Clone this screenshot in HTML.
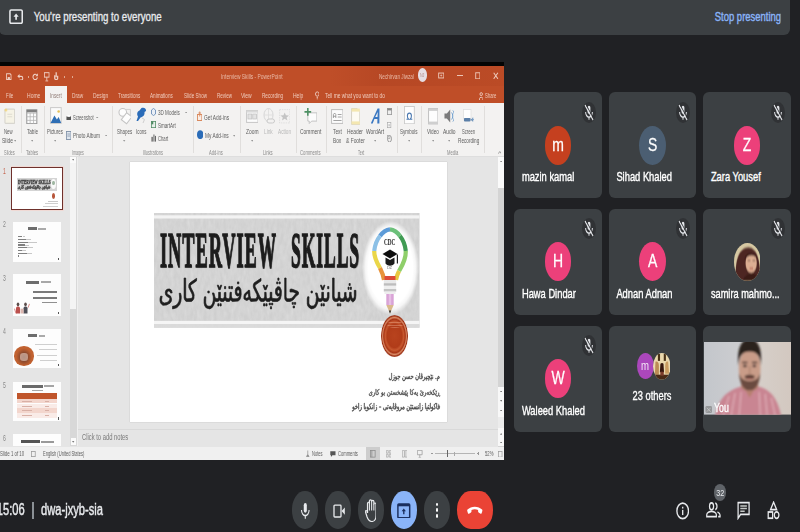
<!DOCTYPE html>
<html><head><meta charset="utf-8">
<style>
*{box-sizing:border-box;margin:0;padding:0}
html,body{width:800px;height:532px;overflow:hidden;background:#202124;font-family:"Liberation Sans",sans-serif;}
#root{position:relative;width:800px;height:532px;overflow:hidden;background:#202124}
</style></head><body>
<div id="root">
<div style="position:absolute;left:-20px;top:-20px;width:840px;height:572px;filter:blur(0.4px)"><div style="position:absolute;left:20px;top:20px;width:800px;height:532px">
<div style="position:absolute;left:-1.5px;top:-10.0px;width:791.5px;height:45.0px;background:#3c4043;border-radius:6px;"></div>
<svg style="position:absolute;left:9.0px;top:9.0px;" width="14.2" height="15.3" viewBox="0 0 24 24" preserveAspectRatio="none"><rect x="1.6" y="1.6" width="20.8" height="20.8" rx="2" fill="none" stroke="#e8eaed" stroke-width="2.6"/><path d="M12 7 L7.6 12 H10.6 V17 H13.4 V12 H16.4 Z" fill="#e8eaed"/></svg>
<div style="position:absolute;left:33.8px;top:13.21px;font-family:'Liberation Sans',sans-serif;font-size:9.68px;line-height:9.68px;color:#e8eaed;white-space:nowrap;transform:scale(1,1.36);transform-origin:0 8.19px;-webkit-text-stroke:0.25px #e8eaed;">You're presenting to everyone</div>
<div style="position:absolute;left:714.8px;top:12.99px;font-family:'Liberation Sans',sans-serif;font-size:9.46px;line-height:9.46px;color:#8ab4f8;white-space:nowrap;transform:scale(1,1.36);transform-origin:0 8.01px;-webkit-text-stroke:0.3px #8ab4f8;">Stop presenting</div>
<div style="position:absolute;left:514.3px;top:92.2px;width:87.6px;height:106.3px;background:#3c4043;border-radius:6px;"></div>
<div style="position:absolute;left:544.7px;top:125.7px;width:26.8px;height:39.0px;background:#c5401f;border-radius:50%;"></div>
<div style="position:absolute;left:358.1px;width:400px;text-align:center;top:138.75px;font-family:'Liberation Sans',sans-serif;font-size:14px;line-height:14px;color:#fff;white-space:nowrap;transform:scale(1,1.36);transform-origin:50% 11.85px;-webkit-text-stroke:0.2px #fff;">m</div>
<div style="position:absolute;left:521.9px;top:174.39px;font-family:'Liberation Sans',sans-serif;font-size:9.35px;line-height:9.35px;color:#fff;white-space:nowrap;transform:scale(1,1.36);transform-origin:0 7.91px;-webkit-text-stroke:0.28px #fff;">mazin kamal</div>
<svg style="position:absolute;left:581.7px;top:101.7px;" width="14.0" height="21.0" viewBox="0 0 24 24" preserveAspectRatio="none"><ellipse cx="12" cy="12" rx="12" ry="12" fill="#303235"/><g fill="none" stroke="#e4e6ea" stroke-width="1.700"><rect x="9.600" y="4.300" width="4.800" height="9.200" rx="2.400" fill="#e4e6ea" stroke="none"/><path d="M6.200 11.500a5.800 5.800 0 0 0 11.600 0M12 17.300v3"/><path d="M5.200 3.500 L19 20.500" stroke="#e4e6ea" stroke-width="1.900"/><path d="M6.600 2.600 L20.400 19.600" stroke="#303235" stroke-width="1.200"/></g></svg>
<div style="position:absolute;left:608.8px;top:92.2px;width:87.6px;height:106.3px;background:#3c4043;border-radius:6px;"></div>
<div style="position:absolute;left:639.2px;top:125.7px;width:26.8px;height:39.0px;background:#4b5e72;border-radius:50%;"></div>
<div style="position:absolute;left:452.6px;width:400px;text-align:center;top:138.75px;font-family:'Liberation Sans',sans-serif;font-size:14px;line-height:14px;color:#fff;white-space:nowrap;transform:scale(1,1.36);transform-origin:50% 11.85px;-webkit-text-stroke:0.2px #fff;">S</div>
<div style="position:absolute;left:616.4px;top:174.39px;font-family:'Liberation Sans',sans-serif;font-size:9.35px;line-height:9.35px;color:#fff;white-space:nowrap;transform:scale(1,1.36);transform-origin:0 7.91px;-webkit-text-stroke:0.28px #fff;">Sihad Khaled</div>
<svg style="position:absolute;left:676.2px;top:101.7px;" width="14.0" height="21.0" viewBox="0 0 24 24" preserveAspectRatio="none"><ellipse cx="12" cy="12" rx="12" ry="12" fill="#303235"/><g fill="none" stroke="#e4e6ea" stroke-width="1.700"><rect x="9.600" y="4.300" width="4.800" height="9.200" rx="2.400" fill="#e4e6ea" stroke="none"/><path d="M6.200 11.500a5.800 5.800 0 0 0 11.600 0M12 17.300v3"/><path d="M5.200 3.500 L19 20.500" stroke="#e4e6ea" stroke-width="1.900"/><path d="M6.600 2.600 L20.400 19.600" stroke="#303235" stroke-width="1.200"/></g></svg>
<div style="position:absolute;left:703.3px;top:92.2px;width:87.6px;height:106.3px;background:#3c4043;border-radius:6px;"></div>
<div style="position:absolute;left:733.7px;top:125.7px;width:26.8px;height:39.0px;background:#ec407a;border-radius:50%;"></div>
<div style="position:absolute;left:547.1px;width:400px;text-align:center;top:138.75px;font-family:'Liberation Sans',sans-serif;font-size:14px;line-height:14px;color:#fff;white-space:nowrap;transform:scale(1,1.36);transform-origin:50% 11.85px;-webkit-text-stroke:0.2px #fff;">Z</div>
<div style="position:absolute;left:710.9px;top:174.39px;font-family:'Liberation Sans',sans-serif;font-size:9.35px;line-height:9.35px;color:#fff;white-space:nowrap;transform:scale(1,1.36);transform-origin:0 7.91px;-webkit-text-stroke:0.28px #fff;">Zara Yousef</div>
<svg style="position:absolute;left:770.7px;top:101.7px;" width="14.0" height="21.0" viewBox="0 0 24 24" preserveAspectRatio="none"><ellipse cx="12" cy="12" rx="12" ry="12" fill="#303235"/><g fill="none" stroke="#e4e6ea" stroke-width="1.700"><rect x="9.600" y="4.300" width="4.800" height="9.200" rx="2.400" fill="#e4e6ea" stroke="none"/><path d="M6.200 11.500a5.800 5.800 0 0 0 11.600 0M12 17.300v3"/><path d="M5.200 3.500 L19 20.500" stroke="#e4e6ea" stroke-width="1.900"/><path d="M6.600 2.600 L20.400 19.600" stroke="#303235" stroke-width="1.200"/></g></svg>
<div style="position:absolute;left:514.3px;top:208.8px;width:87.6px;height:106.3px;background:#3c4043;border-radius:6px;"></div>
<div style="position:absolute;left:544.7px;top:242.3px;width:26.8px;height:39.0px;background:#ec407a;border-radius:50%;"></div>
<div style="position:absolute;left:358.1px;width:400px;text-align:center;top:255.35px;font-family:'Liberation Sans',sans-serif;font-size:14px;line-height:14px;color:#fff;white-space:nowrap;transform:scale(1,1.36);transform-origin:50% 11.85px;-webkit-text-stroke:0.2px #fff;">H</div>
<div style="position:absolute;left:521.9px;top:290.99px;font-family:'Liberation Sans',sans-serif;font-size:9.35px;line-height:9.35px;color:#fff;white-space:nowrap;transform:scale(1,1.36);transform-origin:0 7.91px;-webkit-text-stroke:0.28px #fff;">Hawa Dindar</div>
<svg style="position:absolute;left:581.7px;top:218.3px;" width="14.0" height="21.0" viewBox="0 0 24 24" preserveAspectRatio="none"><ellipse cx="12" cy="12" rx="12" ry="12" fill="#303235"/><g fill="none" stroke="#e4e6ea" stroke-width="1.700"><rect x="9.600" y="4.300" width="4.800" height="9.200" rx="2.400" fill="#e4e6ea" stroke="none"/><path d="M6.200 11.500a5.800 5.800 0 0 0 11.600 0M12 17.300v3"/><path d="M5.200 3.500 L19 20.500" stroke="#e4e6ea" stroke-width="1.900"/><path d="M6.600 2.600 L20.400 19.600" stroke="#303235" stroke-width="1.200"/></g></svg>
<div style="position:absolute;left:608.8px;top:208.8px;width:87.6px;height:106.3px;background:#3c4043;border-radius:6px;"></div>
<div style="position:absolute;left:639.2px;top:242.3px;width:26.8px;height:39.0px;background:#ec407a;border-radius:50%;"></div>
<div style="position:absolute;left:452.6px;width:400px;text-align:center;top:255.35px;font-family:'Liberation Sans',sans-serif;font-size:14px;line-height:14px;color:#fff;white-space:nowrap;transform:scale(1,1.36);transform-origin:50% 11.85px;-webkit-text-stroke:0.2px #fff;">A</div>
<div style="position:absolute;left:616.4px;top:290.99px;font-family:'Liberation Sans',sans-serif;font-size:9.35px;line-height:9.35px;color:#fff;white-space:nowrap;transform:scale(1,1.36);transform-origin:0 7.91px;-webkit-text-stroke:0.28px #fff;">Adnan Adnan</div>
<svg style="position:absolute;left:676.2px;top:218.3px;" width="14.0" height="21.0" viewBox="0 0 24 24" preserveAspectRatio="none"><ellipse cx="12" cy="12" rx="12" ry="12" fill="#303235"/><g fill="none" stroke="#e4e6ea" stroke-width="1.700"><rect x="9.600" y="4.300" width="4.800" height="9.200" rx="2.400" fill="#e4e6ea" stroke="none"/><path d="M6.200 11.500a5.800 5.800 0 0 0 11.600 0M12 17.300v3"/><path d="M5.200 3.500 L19 20.500" stroke="#e4e6ea" stroke-width="1.900"/><path d="M6.600 2.600 L20.400 19.600" stroke="#303235" stroke-width="1.200"/></g></svg>
<div style="position:absolute;left:703.3px;top:208.8px;width:87.6px;height:106.3px;background:#3c4043;border-radius:6px;"></div>
<svg style="position:absolute;left:733.7px;top:242.8px;" width="26.8" height="38.0" viewBox="0 0 27 38" preserveAspectRatio="none"><defs><clipPath id="pc"><ellipse cx="13.5" cy="19" rx="13.5" ry="19"/></clipPath><filter id="pb"><feGaussianBlur stdDeviation="0.8"/></filter></defs><g clip-path="url(#pc)"><rect width="27" height="38" fill="#d6c8a2"/><g filter="url(#pb)"><path d="M2 38 C0.500 20 4 5 14.500 4.500 C24 5 27 20 26 38 Z" fill="#4e2622"/><ellipse cx="17.300" cy="20" rx="5.700" ry="9.800" fill="#dcae92"/><path d="M10.500 17 C11 8 21 7 24 16 C20 11.500 15 11 10.500 17Z" fill="#3e1c1a"/><path d="M13.800 17.500h2.600M18.800 17.500h2.600" stroke="#4a2a24" stroke-width="1.200"/><path d="M15.800 25.500h3.400" stroke="#b4584e" stroke-width="1.400"/><path d="M9 38 C10 33 14 30.500 17.500 30.500 C21 30.500 24 33 25 38Z" fill="#3a1a18"/></g></g></svg>
<div style="position:absolute;left:710.9px;top:291.08px;font-family:'Liberation Sans',sans-serif;font-size:9.24px;line-height:9.24px;color:#fff;white-space:nowrap;transform:scale(1,1.36);transform-origin:0 7.82px;-webkit-text-stroke:0.28px #fff;">samira mahmo...</div>
<svg style="position:absolute;left:770.7px;top:218.3px;" width="14.0" height="21.0" viewBox="0 0 24 24" preserveAspectRatio="none"><ellipse cx="12" cy="12" rx="12" ry="12" fill="#303235"/><g fill="none" stroke="#e4e6ea" stroke-width="1.700"><rect x="9.600" y="4.300" width="4.800" height="9.200" rx="2.400" fill="#e4e6ea" stroke="none"/><path d="M6.200 11.500a5.800 5.800 0 0 0 11.600 0M12 17.300v3"/><path d="M5.200 3.500 L19 20.500" stroke="#e4e6ea" stroke-width="1.900"/><path d="M6.600 2.600 L20.400 19.600" stroke="#303235" stroke-width="1.200"/></g></svg>
<div style="position:absolute;left:514.3px;top:325.5px;width:87.6px;height:106.3px;background:#3c4043;border-radius:6px;"></div>
<div style="position:absolute;left:544.7px;top:359.0px;width:26.8px;height:39.0px;background:#ec407a;border-radius:50%;"></div>
<div style="position:absolute;left:358.1px;width:400px;text-align:center;top:372.05px;font-family:'Liberation Sans',sans-serif;font-size:14px;line-height:14px;color:#fff;white-space:nowrap;transform:scale(1,1.36);transform-origin:50% 11.85px;-webkit-text-stroke:0.2px #fff;">W</div>
<div style="position:absolute;left:521.9px;top:407.69px;font-family:'Liberation Sans',sans-serif;font-size:9.35px;line-height:9.35px;color:#fff;white-space:nowrap;transform:scale(1,1.36);transform-origin:0 7.91px;-webkit-text-stroke:0.28px #fff;">Waleed Khaled</div>
<svg style="position:absolute;left:581.7px;top:335.0px;" width="14.0" height="21.0" viewBox="0 0 24 24" preserveAspectRatio="none"><ellipse cx="12" cy="12" rx="12" ry="12" fill="#303235"/><g fill="none" stroke="#e4e6ea" stroke-width="1.700"><rect x="9.600" y="4.300" width="4.800" height="9.200" rx="2.400" fill="#e4e6ea" stroke="none"/><path d="M6.200 11.500a5.800 5.800 0 0 0 11.600 0M12 17.300v3"/><path d="M5.200 3.500 L19 20.500" stroke="#e4e6ea" stroke-width="1.900"/><path d="M6.600 2.600 L20.400 19.600" stroke="#303235" stroke-width="1.200"/></g></svg>
<div style="position:absolute;left:608.8px;top:325.5px;width:87.6px;height:106.3px;background:#3c4043;border-radius:6px;"></div>
<div style="position:absolute;left:703.3px;top:325.5px;width:87.6px;height:106.3px;background:#3c4043;border-radius:6px;"></div>
<div style="position:absolute;left:636.6px;top:352.5px;width:17.0px;height:26.4px;background:#ab47bc;border-radius:50%;"></div>
<div style="position:absolute;left:445.1px;width:400px;text-align:center;top:361.87px;font-family:'Liberation Sans',sans-serif;font-size:9.6px;line-height:9.6px;color:#f3e5f5;white-space:nowrap;transform:scale(1,1.36);transform-origin:50% 8.13px;">m</div>
<svg style="position:absolute;left:652.7px;top:353.0px;" width="17.6" height="26.6" viewBox="0 0 18 27" preserveAspectRatio="none"><defs><clipPath id="oc"><ellipse cx="9" cy="13.5" rx="9" ry="13.5"/></clipPath><filter id="ob"><feGaussianBlur stdDeviation="0.65"/></filter></defs><g clip-path="url(#oc)"><rect width="18" height="27" fill="#ead9ae"/><g filter="url(#ob)"><rect x="5" y="1" width="2.200" height="7" fill="#4a3018"/><rect x="11" y="1" width="2.200" height="7" fill="#4a3018"/><path d="M2.500 9 C4 8 6 9 6 13 V22 H2Z" fill="#bb8c54"/><path d="M15.500 9 C14 8 12.500 9 12.500 13 V21 H16.500Z" fill="#c99c60"/><path d="M7.600 11 C8.500 10 10 10 10.700 11 L11.300 19.500 H7Z" fill="#35190e"/><rect x="0" y="22" width="18" height="5" fill="#4a2a18"/><rect x="7.500" y="19" width="3.500" height="4" fill="#7a3a2a"/></g></g></svg>
<div style="position:absolute;left:452.0px;width:400px;text-align:center;top:392.53px;font-family:'Liberation Sans',sans-serif;font-size:9.3px;line-height:9.3px;color:#fff;white-space:nowrap;transform:scale(1,1.36);transform-origin:50% 7.87px;-webkit-text-stroke:0.25px #fff;">23 others</div>
<svg style="position:absolute;left:703.5px;top:342.0px;" width="87.3" height="72.8" viewBox="0 0 87 73" preserveAspectRatio="none"><defs><filter id="vb" x="-10%" y="-10%" width="120%" height="120%"><feGaussianBlur stdDeviation="0.9"/></filter>
<linearGradient id="wall" x1="0" x2="1"><stop offset="0" stop-color="#c3c6cb"/><stop offset="0.4" stop-color="#cccdd0"/><stop offset="0.62" stop-color="#d6cfc9"/><stop offset="1" stop-color="#d3c8c0"/></linearGradient>
<clipPath id="vc"><rect width="87" height="73"/></clipPath></defs>
<g clip-path="url(#vc)"><rect width="87" height="73" fill="url(#wall)"/>
<g filter="url(#vb)">
<path d="M11 74 C15 55 24 49 36 45 L55 45 C66 48 73 56 77 74 Z" fill="#c98592"/>
<path d="M39 44 L45.500 56 L52 44Z" fill="#b8806f"/>
<path d="M37 30 H54 V46 C50 51 41 51 37 46Z" fill="#b58270"/>
<ellipse cx="45.500" cy="27" rx="10.800" ry="20" fill="#c99c88"/>
<path d="M34.500 24 C32.500 6 37.500 -3 45.500 -3 C53.500 -3 58.500 6 56.500 24 C56 14 53 9.500 45.500 9.500 C38 9.500 35 14 34.500 24Z" fill="#2a211e"/>
<path d="M35 31 C35.500 43 40 48.500 45.500 48.500 C51 48.500 55.500 43 56 31 C54 37 51 39 45.500 39 C40 39 37 37 35 31Z" fill="#6b4b41"/><path d="M40.500 34 C43 32.500 48 32.500 50.500 34 L50 36.500 H41Z" fill="#5a3c34"/>
<path d="M42.500 37 H48.500" stroke="#9a5a55" stroke-width="1.300"/>
<path d="M38 20.500 H43.200 M47.800 20.500 H53" stroke="#3a2a26" stroke-width="1.500"/>
<ellipse cx="40.800" cy="24" rx="1.900" ry="1.300" fill="#3d2d2a"/><ellipse cx="50.200" cy="24" rx="1.900" ry="1.300" fill="#3d2d2a"/>
<path d="M45.500 24 V32" stroke="#b08570" stroke-width="1.400"/>
<path d="M19 74 L25 54 M27 74 L31 51 M35 74 L37 50 M56 74 L55 50 M63 74 L61 52 M71 74 L67 56" stroke="#e2b3bc" stroke-width="1.100" fill="none"/>
</g></g></svg>
<div style="position:absolute;left:714.0px;top:404.75px;font-family:'Liberation Sans',sans-serif;font-size:8.8px;line-height:8.8px;color:#fff;white-space:nowrap;transform:scale(1,1.36);transform-origin:0 7.45px;-webkit-text-stroke:0.25px #fff;">You</div>
<svg style="position:absolute;left:704.5px;top:405.0px;" width="7.5" height="8.5" viewBox="0 0 8 9" preserveAspectRatio="none"><rect x="0.5" y="1" width="7" height="7.5" rx="1.5" fill="#707070" opacity=".55"/><path d="M2 3 L6 7 M6 3 L2 7" stroke="#ddd" stroke-width="0.800" opacity=".7"/></svg>
<div style="position:absolute;left:-3.2px;top:506.46px;font-family:'Liberation Sans',sans-serif;font-size:11.15px;line-height:11.15px;color:#e8eaed;white-space:nowrap;transform:scale(1,1.42);transform-origin:0 9.44px;-webkit-text-stroke:0.3px #e8eaed;">15:06</div>
<div style="position:absolute;left:32.2px;top:502.0px;width:1.5px;height:16.5px;background:#8a9095;"></div>
<div style="position:absolute;left:41.1px;top:506.46px;font-family:'Liberation Sans',sans-serif;font-size:11.15px;line-height:11.15px;color:#e8eaed;white-space:nowrap;transform:scale(1,1.42);transform-origin:0 9.44px;-webkit-text-stroke:0.3px #e8eaed;">dwa-jxyb-sia</div>
<div style="position:absolute;left:292.2px;top:491.4px;width:25.6px;height:37.2px;background:#3c4043;border-radius:12.8px/18.6px;"></div>
<div style="position:absolute;left:325.2px;top:491.4px;width:25.6px;height:37.2px;background:#3c4043;border-radius:12.8px/18.6px;"></div>
<div style="position:absolute;left:358.2px;top:491.4px;width:25.6px;height:37.2px;background:#3c4043;border-radius:12.8px/18.6px;"></div>
<div style="position:absolute;left:391.2px;top:491.4px;width:25.6px;height:37.2px;background:#8ab4f8;border-radius:12.8px/18.6px;"></div>
<div style="position:absolute;left:424.3px;top:491.4px;width:25.6px;height:37.2px;background:#3c4043;border-radius:12.8px/18.6px;"></div>
<div style="position:absolute;left:456.7px;top:491.4px;width:36.4px;height:37.2px;background:#ea4335;border-radius:13.8px/18.6px;"></div>
<svg style="position:absolute;left:299.0px;top:501.0px;" width="12.6" height="19.0" viewBox="0 0 14 14" preserveAspectRatio="none"><rect x="5.3" y="1.4" width="3.4" height="7.2" rx="1.7" fill="#e8eaed"/><path d="M2.8 6.6a4.2 4.2 0 0 0 8.4 0M7 10.8v2.2" fill="none" stroke="#e8eaed" stroke-width="1.2"/></svg>
<svg style="position:absolute;left:332.5px;top:503.8px;" width="12.4" height="14.2" viewBox="0 0 12.4 14.2" preserveAspectRatio="none"><rect x="1" y="1.2" width="7" height="11.8" rx="0.8" fill="none" stroke="#e8eaed" stroke-width="1.3"/><path d="M8.6 7.1 L11.8 3.4 V10.8Z" fill="#e8eaed"/></svg>
<svg style="position:absolute;left:364.8px;top:498.7px;" width="11.6" height="23.2" viewBox="0 0 11 23" preserveAspectRatio="none"><path d="M2.400 13.800V4.400Q2.400 3.200 3.300 3.200Q4.200 3.200 4.200 4.400V2Q4.200 0.800 5.250 0.800Q6.300 0.800 6.300 2V2.600Q6.300 1.400 7.350 1.400Q8.400 1.400 8.400 2.600V5Q8.400 4 9.450 4Q10.500 4 10.500 5.200V16C10.500 20 8.800 22.300 6.400 22.300C4.300 22.300 2.900 20.600 1.900 17.600L0.400 12.600C0.200 11.600 1 11 1.700 11.800L2.400 13.800" fill="none" stroke="#e8eaed" stroke-width="1.150" stroke-linejoin="round"/><path d="M4.200 4.400V11.500M6.300 2.600V11.500M8.400 5V11.500" stroke="#e8eaed" stroke-width="1" fill="none"/></svg>
<svg style="position:absolute;left:397.2px;top:502.6px;" width="13.6" height="15.8" viewBox="0 0 24 24" preserveAspectRatio="none"><rect x="1.6" y="1.6" width="20.8" height="20.8" rx="1.5" fill="none" stroke="#1b2f5e" stroke-width="2.6"/><rect x="1.6" y="1.6" width="20.8" height="3.4" fill="#1b2f5e"/><path d="M12 8.2 L8.2 12.6 H10.8 V17 H13.2 V12.6 H15.8 Z" fill="#1b2f5e"/></svg>
<div style="position:absolute;left:435.5px;top:502.7px;width:2.7px;height:3.8px;background:#fff;border-radius:50%;"></div>
<div style="position:absolute;left:435.5px;top:508.3px;width:2.7px;height:3.8px;background:#fff;border-radius:50%;"></div>
<div style="position:absolute;left:435.5px;top:514.3px;width:2.7px;height:3.8px;background:#fff;border-radius:50%;"></div>
<svg style="position:absolute;left:467.3px;top:506.0px;" width="15.6" height="8.6" viewBox="0 0 24 10" preserveAspectRatio="none"><path d="M12 0.8C7.6 0.8 3.6 2 0.8 4.2c-.5.4-.6 1-.4 1.5l1.1 2.6c.3.6 1 .9 1.6.6l3-1.3c.5-.2.8-.7.8-1.2V4.6c1.6-.6 3.300-.9 5.100-.9s3.500.3 5.100.9V6.400c0 .5.300 1 .8 1.200l3 1.300c.6.300 1.300 0 1.600-.6l1.100-2.600c.2-.5.100-1.100-.4-1.500C20.400 2 16.400.8 12 .8z" fill="#fff"/></svg>
<svg style="position:absolute;left:675.6px;top:502.2px;" width="13.4" height="17.8" viewBox="0 0 24 24" preserveAspectRatio="none"><circle cx="12" cy="12" r="10.4" fill="none" stroke="#e8eaed" stroke-width="2.4"/><rect x="10.8" y="10.6" width="2.4" height="7" fill="#e8eaed"/><rect x="10.800" y="6.400" width="2.400" height="2.400" fill="#e8eaed"/></svg>
<svg style="position:absolute;left:705.8px;top:502.2px;" width="14.8" height="15.6" viewBox="0 0 24 18" preserveAspectRatio="none"><ellipse cx="9" cy="5" rx="3.300" ry="4" fill="none" stroke="#e8eaed" stroke-width="2"/><path d="M1.200 17v-2.200c0-2.500 4.600-4 7.800-4s7.800 1.500 7.800 4V17z" fill="none" stroke="#e8eaed" stroke-width="2"/><path d="M15 1.200c1.800.4 2.800 1.900 2.800 3.800s-1 3.400-2.800 3.800M18.600 11.600c2 .7 4.200 1.700 4.200 3.400v2h-3" fill="none" stroke="#e8eaed" stroke-width="2"/></svg>
<div style="position:absolute;left:713.9px;top:484.4px;width:12.6px;height:17.0px;background:#5f6368;border-radius:50%;"></div>
<div style="position:absolute;left:520.2px;width:400px;text-align:center;top:489.81px;font-family:'Liberation Sans',sans-serif;font-size:7.2px;line-height:7.2px;color:#e8eaed;white-space:nowrap;transform:scale(1,1.35);transform-origin:50% 6.09px;">32</div>
<svg style="position:absolute;left:737.0px;top:501.4px;" width="13.2" height="18.2" viewBox="0 0 24 24" preserveAspectRatio="none"><path d="M2 2.200h20v15.600H6.500L2 22.800z" fill="none" stroke="#e8eaed" stroke-width="2.300"/><path d="M6 6.500h12M6 10h12M6 13.500h8" stroke="#c4c7c5" stroke-width="2"/></svg>
<svg style="position:absolute;left:767.4px;top:501.0px;" width="13.2" height="18.6" viewBox="0 0 24 24" preserveAspectRatio="none"><path d="M12 1.500 L17.500 11 H6.500Z" fill="none" stroke="#e8eaed" stroke-width="2.300"/><rect x="2.200" y="14.200" width="8" height="8" fill="none" stroke="#e8eaed" stroke-width="2.300"/><circle cx="17.500" cy="18.200" r="4.200" fill="none" stroke="#e8eaed" stroke-width="2.300"/></svg>
</div></div>
<div style="position:absolute;left:-20px;top:-20px;width:840px;height:572px;filter:blur(0.55px)"><div style="position:absolute;left:20px;top:20px;width:800px;height:532px">
<div style="position:absolute;left:0.0px;top:62.4px;width:504.4px;height:4.4px;background:#040404;"></div>
<div style="position:absolute;left:0.0px;top:66.4px;width:504.4px;height:393.4px;background:#e6e6e6;"></div>
<div style="position:absolute;left:0.0px;top:66.3px;width:504.4px;height:37.2px;background:#bf4e28;"></div>
<div style="position:absolute;left:330.0px;top:66.3px;width:174.4px;height:20.0px;background:linear-gradient(90deg,rgba(170,62,30,0),rgba(172,64,32,.45) 30%,rgba(175,66,32,.25) 100%);"></div>
<svg style="position:absolute;left:6.2px;top:72.8px;" width="5.6" height="7.4" viewBox="0 0 10 10" preserveAspectRatio="none"><path d="M1 1h6.500L9 2.500V9H1z" fill="none" stroke="#efd0c4" stroke-width="1.500"/><rect x="3" y="5.500" width="4" height="3.500" fill="#efd0c4"/></svg>
<svg style="position:absolute;left:17.4px;top:72.8px;" width="6.4" height="7.4" viewBox="0 0 10 10" preserveAspectRatio="none"><path d="M2 4.500h4.500a2.500 2.500 0 0 1 0 5H4" fill="none" stroke="#efd0c4" stroke-width="1.600"/><path d="M0.500 4.500L4 1.500v6z" fill="#efd0c4"/></svg>
<svg style="position:absolute;left:32.4px;top:72.8px;" width="6.2" height="7.4" viewBox="0 0 10 10" preserveAspectRatio="none"><path d="M7.500 2.500A3.600 3.600 0 1 0 8.800 6" fill="none" stroke="#efd0c4" stroke-width="1.600"/><path d="M9.500 0.500v4H5.500z" fill="#efd0c4"/></svg>
<svg style="position:absolute;left:44.2px;top:72.2px;" width="5.6" height="9.6" viewBox="0 0 10 14" preserveAspectRatio="none"><rect x="1" y="1" width="8" height="6.500" fill="none" stroke="#efd0c4" stroke-width="1.400"/><path d="M5 7.500v5M2.500 13h5" stroke="#efd0c4" stroke-width="1.400"/></svg>
<svg style="position:absolute;left:54.3px;top:71.6px;" width="4.4" height="8.8" viewBox="0 0 6 14" preserveAspectRatio="none"><path d="M3 0.500v8M1 5v5.500c0 2 4 2 4 0V6" fill="none" stroke="#efd0c4" stroke-width="1.700"/></svg>
<div style="position:absolute;left:63.5px;top:76.2px;width:1.6px;height:1.6px;background:#e0a890;"></div>
<div style="position:absolute;left:71.5px;top:76.2px;width:1.6px;height:1.6px;background:#e0a890;"></div>
<div style="position:absolute;left:28.0px;top:76.0px;width:1.2px;height:1.6px;background:#e0a890;"></div>
<div style="position:absolute;left:220.5px;top:61.97px;font-family:'Liberation Sans',sans-serif;font-size:20px;line-height:20px;color:#e9b9a6;white-space:pre;transform:scale(0.2438,0.3779);transform-origin:0 16.93px;">Interview Skills - PowerPoint</div>
<div style="position:absolute;left:378.8px;top:61.97px;font-family:'Liberation Sans',sans-serif;font-size:20px;line-height:20px;color:#e9b9a6;white-space:pre;transform:scale(0.2333,0.3779);transform-origin:0 16.93px;">Nechirvan Jiwzal</div>
<div style="position:absolute;left:417.6px;top:68.3px;width:9.8px;height:14.0px;background:#e6dde2;border-radius:50%;"></div>
<div style="position:absolute;left:420.3px;top:60.17px;font-family:'Liberation Sans',sans-serif;font-size:20px;line-height:20px;color:#b08a88;white-space:pre;transform:scale(0.1800,0.2471);transform-origin:0 16.93px;">NJ</div>
<svg style="position:absolute;left:437.5px;top:72.2px;" width="6.5" height="7.0" viewBox="0 0 10 10" preserveAspectRatio="none"><rect x="1" y="1.500" width="8" height="7" fill="none" stroke="#ecc4b4" stroke-width="1.400"/><path d="M3.500 5h3M5 3.500v3" stroke="#ecc4b4" stroke-width="1"/></svg>
<div style="position:absolute;left:456.5px;top:75.3px;width:6.0px;height:1.0px;background:#ecc4b4;"></div>
<svg style="position:absolute;left:474.5px;top:71.8px;" width="5.6" height="7.6" viewBox="0 0 8 10" preserveAspectRatio="none"><rect x="1" y="1" width="6" height="8" fill="none" stroke="#ecc4b4" stroke-width="1.300"/></svg>
<svg style="position:absolute;left:493.0px;top:71.8px;" width="5.6" height="7.6" viewBox="0 0 8 10" preserveAspectRatio="none"><path d="M1 1L7 9M7 1L1 9" stroke="#efcdbf" stroke-width="1.400"/></svg>
<div style="position:absolute;left:6.0px;top:81.17px;font-family:'Liberation Sans',sans-serif;font-size:20px;line-height:20px;color:#f0cdbf;white-space:pre;transform:scale(0.2234,0.3924);transform-origin:0 16.93px;">File</div>
<div style="position:absolute;left:26.6px;top:81.17px;font-family:'Liberation Sans',sans-serif;font-size:20px;line-height:20px;color:#f0cdbf;white-space:pre;transform:scale(0.2512,0.3924);transform-origin:0 16.93px;">Home</div>
<div style="position:absolute;left:71.8px;top:81.17px;font-family:'Liberation Sans',sans-serif;font-size:20px;line-height:20px;color:#f0cdbf;white-space:pre;transform:scale(0.2378,0.3924);transform-origin:0 16.93px;">Draw</div>
<div style="position:absolute;left:92.9px;top:81.17px;font-family:'Liberation Sans',sans-serif;font-size:20px;line-height:20px;color:#f0cdbf;white-space:pre;transform:scale(0.2426,0.3924);transform-origin:0 16.93px;">Design</div>
<div style="position:absolute;left:117.5px;top:81.17px;font-family:'Liberation Sans',sans-serif;font-size:20px;line-height:20px;color:#f0cdbf;white-space:pre;transform:scale(0.2297,0.3924);transform-origin:0 16.93px;">Transitions</div>
<div style="position:absolute;left:149.8px;top:81.17px;font-family:'Liberation Sans',sans-serif;font-size:20px;line-height:20px;color:#f0cdbf;white-space:pre;transform:scale(0.2305,0.3924);transform-origin:0 16.93px;">Animations</div>
<div style="position:absolute;left:183.6px;top:81.17px;font-family:'Liberation Sans',sans-serif;font-size:20px;line-height:20px;color:#f0cdbf;white-space:pre;transform:scale(0.2299,0.3924);transform-origin:0 16.93px;">Slide Show</div>
<div style="position:absolute;left:217.0px;top:81.17px;font-family:'Liberation Sans',sans-serif;font-size:20px;line-height:20px;color:#f0cdbf;white-space:pre;transform:scale(0.2287,0.3924);transform-origin:0 16.93px;">Review</div>
<div style="position:absolute;left:241.3px;top:81.17px;font-family:'Liberation Sans',sans-serif;font-size:20px;line-height:20px;color:#f0cdbf;white-space:pre;transform:scale(0.2489,0.3924);transform-origin:0 16.93px;">View</div>
<div style="position:absolute;left:261.8px;top:81.17px;font-family:'Liberation Sans',sans-serif;font-size:20px;line-height:20px;color:#f0cdbf;white-space:pre;transform:scale(0.2326,0.3924);transform-origin:0 16.93px;">Recording</div>
<div style="position:absolute;left:293.0px;top:81.17px;font-family:'Liberation Sans',sans-serif;font-size:20px;line-height:20px;color:#f0cdbf;white-space:pre;transform:scale(0.2504,0.3924);transform-origin:0 16.93px;">Help</div>
<div style="position:absolute;left:324.5px;top:81.17px;font-family:'Liberation Sans',sans-serif;font-size:20px;line-height:20px;color:#f0cdbf;white-space:pre;transform:scale(0.2431,0.3924);transform-origin:0 16.93px;">Tell me what you want to do</div>
<svg style="position:absolute;left:314.8px;top:90.5px;" width="4.6" height="9.5" viewBox="0 0 8 14" preserveAspectRatio="none"><circle cx="4" cy="4.500" r="3.200" fill="none" stroke="#f3d9cf" stroke-width="1.300"/><path d="M2.800 9.500h2.400M3 11.500h2" stroke="#f3d9cf" stroke-width="1.200"/></svg>
<svg style="position:absolute;left:478.5px;top:91.5px;" width="4.4" height="8.5" viewBox="0 0 8 12" preserveAspectRatio="none"><circle cx="4" cy="3" r="2.200" fill="none" stroke="#f3d9cf" stroke-width="1.300"/><path d="M0.800 11.500V9c0-2 6.400-2 6.400 0v2.500" fill="none" stroke="#f3d9cf" stroke-width="1.300"/></svg>
<div style="position:absolute;left:485.0px;top:81.27px;font-family:'Liberation Sans',sans-serif;font-size:20px;line-height:20px;color:#f0cdbf;white-space:pre;transform:scale(0.2117,0.3779);transform-origin:0 16.93px;">Share</div>
<div style="position:absolute;left:0.0px;top:103.4px;width:504.4px;height:52.2px;background:#f3f2f1;"></div>
<div style="position:absolute;left:45.0px;top:86.3px;width:21.6px;height:18.0px;background:#f3f2f1;"></div>
<div style="position:absolute;left:50.0px;top:81.17px;font-family:'Liberation Sans',sans-serif;font-size:20px;line-height:20px;color:#927d78;white-space:pre;transform:scale(0.2339,0.3924);transform-origin:0 16.93px;">Insert</div>
<div style="position:absolute;left:20.6px;top:106.0px;width:0.8px;height:46.5px;background:#e0dedc;"></div>
<div style="position:absolute;left:44.0px;top:106.0px;width:0.8px;height:46.5px;background:#e0dedc;"></div>
<div style="position:absolute;left:112.2px;top:106.0px;width:0.8px;height:46.5px;background:#e0dedc;"></div>
<div style="position:absolute;left:192.5px;top:106.0px;width:0.8px;height:46.5px;background:#e0dedc;"></div>
<div style="position:absolute;left:240.0px;top:106.0px;width:0.8px;height:46.5px;background:#e0dedc;"></div>
<div style="position:absolute;left:295.5px;top:106.0px;width:0.8px;height:46.5px;background:#e0dedc;"></div>
<div style="position:absolute;left:325.8px;top:106.0px;width:0.8px;height:46.5px;background:#e0dedc;"></div>
<div style="position:absolute;left:397.0px;top:106.0px;width:0.8px;height:46.5px;background:#e0dedc;"></div>
<div style="position:absolute;left:420.5px;top:106.0px;width:0.8px;height:46.5px;background:#e0dedc;"></div>
<div style="position:absolute;left:483.8px;top:106.0px;width:0.8px;height:46.5px;background:#e0dedc;"></div>
<svg style="position:absolute;left:3.6px;top:107.5px;" width="11.6" height="16.5" viewBox="0 0 12 16" preserveAspectRatio="none"><rect x="1" y="1" width="10" height="14" rx="1" fill="#f6f3e6" stroke="#d8d6cf" stroke-width="1.200"/><path d="M3.500 6h5M3.500 8.500h5" stroke="#dedbd0" stroke-width="1"/><circle cx="2" cy="2" r="1.500" fill="#f2d16b" opacity=".7"/></svg>
<div style="position:absolute;left:4.4px;top:117.47px;font-family:'Liberation Sans',sans-serif;font-size:20px;line-height:20px;color:#5c5c5c;white-space:pre;transform:scale(0.2149,0.3779);transform-origin:0 16.93px;">New</div>
<div style="position:absolute;left:2.2px;top:126.27px;font-family:'Liberation Sans',sans-serif;font-size:20px;line-height:20px;color:#5c5c5c;white-space:pre;transform:scale(0.2473,0.3779);transform-origin:0 16.93px;">Slide</div>
<svg style="position:absolute;left:14.1px;top:139.9px;" width="2.4" height="1.8" viewBox="0 0 4 3" preserveAspectRatio="none"><path d="M0 0h4L2 3z" fill="#9a9a9a"/></svg>
<div style="position:absolute;left:3.6px;top:137.77px;font-family:'Liberation Sans',sans-serif;font-size:20px;line-height:20px;color:#8a8a8a;white-space:pre;transform:scale(0.1983,0.3488);transform-origin:0 16.93px;">Slides</div>
<svg style="position:absolute;left:26.4px;top:108.5px;" width="11.6" height="15.5" viewBox="0 0 12 15" preserveAspectRatio="none"><rect x="0.800" y="0.800" width="10.400" height="13.400" fill="#fcfcfc" stroke="#9a9a9a" stroke-width="1.100"/><path d="M0.800 4h10.400M0.800 7.500h10.400M0.800 11h10.400M4.300 4v10M7.800 4v10" stroke="#b4b4b4" stroke-width="0.800"/><rect x="0.800" y="0.800" width="10.400" height="2.400" fill="#808080"/></svg>
<div style="position:absolute;left:26.6px;top:117.47px;font-family:'Liberation Sans',sans-serif;font-size:20px;line-height:20px;color:#5c5c5c;white-space:pre;transform:scale(0.2301,0.3779);transform-origin:0 16.93px;">Table</div>
<svg style="position:absolute;left:31.1px;top:139.9px;" width="2.4" height="1.8" viewBox="0 0 4 3" preserveAspectRatio="none"><path d="M0 0h4L2 3z" fill="#9a9a9a"/></svg>
<div style="position:absolute;left:26.0px;top:137.77px;font-family:'Liberation Sans',sans-serif;font-size:20px;line-height:20px;color:#8a8a8a;white-space:pre;transform:scale(0.2110,0.3488);transform-origin:0 16.93px;">Tables</div>
<svg style="position:absolute;left:50.0px;top:107.4px;" width="11.8" height="17.0" viewBox="0 0 12 17" preserveAspectRatio="none"><rect x="0.600" y="0.600" width="10.800" height="15.800" fill="#fbfbfb" stroke="#c9c9c9" stroke-width="1"/><path d="M0.600 16L4.500 8.500L7 12.500L8.800 10L11.400 16z" fill="#2f6fb5"/><circle cx="8.800" cy="4.500" r="1.300" fill="#e6c15a"/></svg>
<div style="position:absolute;left:47.2px;top:117.47px;font-family:'Liberation Sans',sans-serif;font-size:20px;line-height:20px;color:#5c5c5c;white-space:pre;transform:scale(0.2201,0.3779);transform-origin:0 16.93px;">Pictures</div>
<svg style="position:absolute;left:54.0px;top:139.9px;" width="2.4" height="1.8" viewBox="0 0 4 3" preserveAspectRatio="none"><path d="M0 0h4L2 3z" fill="#9a9a9a"/></svg>
<svg style="position:absolute;left:65.5px;top:114.5px;" width="5.6" height="5.5" viewBox="0 0 6 6" preserveAspectRatio="none"><rect x="0.500" y="1.500" width="5" height="4" fill="#555"/><rect x="1.500" y="0" width="3" height="2" fill="#fff"/></svg>
<div style="position:absolute;left:72.9px;top:102.87px;font-family:'Liberation Sans',sans-serif;font-size:20px;line-height:20px;color:#5c5c5c;white-space:pre;transform:scale(0.2036,0.3779);transform-origin:0 16.93px;">Screenshot</div>
<svg style="position:absolute;left:96.3px;top:116.6px;" width="2.4" height="1.8" viewBox="0 0 4 3" preserveAspectRatio="none"><path d="M0 0h4L2 3z" fill="#9a9a9a"/></svg>
<svg style="position:absolute;left:65.8px;top:130.5px;" width="5.4" height="9.0" viewBox="0 0 6 9" preserveAspectRatio="none"><rect x="0.500" y="0.500" width="5" height="8" fill="#dfe6ee" stroke="#7d8fa6" stroke-width="0.900"/><path d="M1.500 3h3M1.500 5h3" stroke="#7d8fa6" stroke-width="0.800"/></svg>
<div style="position:absolute;left:72.9px;top:121.07px;font-family:'Liberation Sans',sans-serif;font-size:20px;line-height:20px;color:#5c5c5c;white-space:pre;transform:scale(0.2381,0.3779);transform-origin:0 16.93px;">Photo Album</div>
<svg style="position:absolute;left:104.8px;top:134.7px;" width="2.4" height="1.8" viewBox="0 0 4 3" preserveAspectRatio="none"><path d="M0 0h4L2 3z" fill="#9a9a9a"/></svg>
<div style="position:absolute;left:72.3px;top:137.77px;font-family:'Liberation Sans',sans-serif;font-size:20px;line-height:20px;color:#8a8a8a;white-space:pre;transform:scale(0.1784,0.3488);transform-origin:0 16.93px;">Images</div>
<svg style="position:absolute;left:117.8px;top:107.0px;" width="13.4" height="17.5" viewBox="0 0 14 18" preserveAspectRatio="none"><circle cx="5" cy="5.500" r="4" fill="#fdfdfd" stroke="#c4c4c4" stroke-width="1.100"/><rect x="5.500" y="7" width="7" height="9" transform="rotate(38 9 11.500)" fill="#fdfdfd" stroke="#c4c4c4" stroke-width="1.100"/><path d="M8 2.500h5v6" fill="none" stroke="#cfcfcf" stroke-width="1"/></svg>
<div style="position:absolute;left:116.5px;top:117.47px;font-family:'Liberation Sans',sans-serif;font-size:20px;line-height:20px;color:#5c5c5c;white-space:pre;transform:scale(0.2241,0.3779);transform-origin:0 16.93px;">Shapes</div>
<svg style="position:absolute;left:123.2px;top:139.9px;" width="2.4" height="1.8" viewBox="0 0 4 3" preserveAspectRatio="none"><path d="M0 0h4L2 3z" fill="#9a9a9a"/></svg>
<svg style="position:absolute;left:135.8px;top:107.0px;" width="11.0" height="17.0" viewBox="0 0 11 17" preserveAspectRatio="none"><path d="M5.500 1C8 0 10.500 1.500 10 4L8.500 5C9 8 7 10 4.500 10.500L2 14H0.500L2 9.500C0.500 7.500 1 4.500 3.500 3.500Z" fill="#2b6cb8"/><path d="M6 11l2.500 1.500L7 16" fill="none" stroke="#cfcfcf" stroke-width="1"/></svg>
<div style="position:absolute;left:135.8px;top:117.47px;font-family:'Liberation Sans',sans-serif;font-size:20px;line-height:20px;color:#5c5c5c;white-space:pre;transform:scale(0.2176,0.3779);transform-origin:0 16.93px;">Icons</div>
<svg style="position:absolute;left:150.8px;top:107.8px;" width="5.0" height="8.0" viewBox="0 0 5 8" preserveAspectRatio="none"><path d="M2.500 0.500L4.500 2v4L2.500 7.500L0.500 6V2z" fill="#e9eef5" stroke="#6c8db8" stroke-width="0.900"/></svg>
<div style="position:absolute;left:158.2px;top:98.07px;font-family:'Liberation Sans',sans-serif;font-size:20px;line-height:20px;color:#5c5c5c;white-space:pre;transform:scale(0.2281,0.3779);transform-origin:0 16.93px;">3D Models</div>
<svg style="position:absolute;left:184.8px;top:111.7px;" width="2.4" height="1.8" viewBox="0 0 4 3" preserveAspectRatio="none"><path d="M0 0h4L2 3z" fill="#9a9a9a"/></svg>
<svg style="position:absolute;left:150.8px;top:121.0px;" width="5.0" height="7.0" viewBox="0 0 5 7" preserveAspectRatio="none"><rect x="0.300" y="0.300" width="4.400" height="6.400" fill="#e8f0ea" stroke="#4f8a63" stroke-width="0.900"/><rect x="0.300" y="0.300" width="2" height="3" fill="#4f8a63"/></svg>
<div style="position:absolute;left:158.2px;top:111.17px;font-family:'Liberation Sans',sans-serif;font-size:20px;line-height:20px;color:#5c5c5c;white-space:pre;transform:scale(0.2256,0.3779);transform-origin:0 16.93px;">SmartArt</div>
<svg style="position:absolute;left:150.8px;top:134.0px;" width="5.4" height="7.6" viewBox="0 0 6 8" preserveAspectRatio="none"><rect x="0.500" y="3" width="1.500" height="5" fill="#666"/><rect x="2.500" y="0.500" width="1.500" height="7.500" fill="#888"/><rect x="4.400" y="2" width="1.400" height="6" fill="#666"/></svg>
<div style="position:absolute;left:158.2px;top:123.67px;font-family:'Liberation Sans',sans-serif;font-size:20px;line-height:20px;color:#5c5c5c;white-space:pre;transform:scale(0.2086,0.3779);transform-origin:0 16.93px;">Chart</div>
<div style="position:absolute;left:142.6px;top:137.77px;font-family:'Liberation Sans',sans-serif;font-size:20px;line-height:20px;color:#8a8a8a;white-space:pre;transform:scale(0.1977,0.3488);transform-origin:0 16.93px;">Illustrations</div>
<svg style="position:absolute;left:197.0px;top:111.0px;" width="5.4" height="10.0" viewBox="0 0 6 10" preserveAspectRatio="none"><rect x="0.600" y="3.500" width="4.800" height="6" fill="#fbeee6" stroke="#d98a5f" stroke-width="1"/><path d="M3 0.500v5M1.500 2h3" stroke="#d98a5f" stroke-width="0.900"/></svg>
<div style="position:absolute;left:204.2px;top:102.77px;font-family:'Liberation Sans',sans-serif;font-size:20px;line-height:20px;color:#5c5c5c;white-space:pre;transform:scale(0.2402,0.3779);transform-origin:0 16.93px;">Get Add-ins</div>
<svg style="position:absolute;left:196.8px;top:130.0px;" width="6.4" height="9.4" viewBox="0 0 6 9" preserveAspectRatio="none"><path d="M3 0.300C5 0.300 6 2 6 4.500S5 8.700 3 8.700 0 7 0 4.500 1 0.300 3 0.300z" fill="#2b6cb8"/></svg>
<div style="position:absolute;left:204.8px;top:121.17px;font-family:'Liberation Sans',sans-serif;font-size:20px;line-height:20px;color:#5c5c5c;white-space:pre;transform:scale(0.2396,0.3779);transform-origin:0 16.93px;">My Add-ins</div>
<svg style="position:absolute;left:232.5px;top:134.8px;" width="2.4" height="1.8" viewBox="0 0 4 3" preserveAspectRatio="none"><path d="M0 0h4L2 3z" fill="#9a9a9a"/></svg>
<div style="position:absolute;left:209.4px;top:137.77px;font-family:'Liberation Sans',sans-serif;font-size:20px;line-height:20px;color:#8a8a8a;white-space:pre;transform:scale(0.2035,0.3488);transform-origin:0 16.93px;">Add-ins</div>
<svg style="position:absolute;left:245.6px;top:109.6px;" width="12.6" height="13.0" viewBox="0 0 13 13" preserveAspectRatio="none"><rect x="0.600" y="0.600" width="11.800" height="11.800" fill="#fcfcfc" stroke="#c6c6c6" stroke-width="1"/><rect x="2" y="4" width="4" height="5" fill="#e3e3e3" stroke="#bdbdbd" stroke-width="0.700"/><rect x="7" y="4" width="4" height="5" fill="#e3e3e3" stroke="#bdbdbd" stroke-width="0.700"/><rect x="0.600" y="0.600" width="11.800" height="2" fill="#d9d9d9"/></svg>
<div style="position:absolute;left:245.5px;top:117.47px;font-family:'Liberation Sans',sans-serif;font-size:20px;line-height:20px;color:#5c5c5c;white-space:pre;transform:scale(0.2445,0.3779);transform-origin:0 16.93px;">Zoom</div>
<svg style="position:absolute;left:250.5px;top:139.9px;" width="2.4" height="1.8" viewBox="0 0 4 3" preserveAspectRatio="none"><path d="M0 0h4L2 3z" fill="#9a9a9a"/></svg>
<svg style="position:absolute;left:262.5px;top:108.0px;" width="12.0" height="17.0" viewBox="0 0 12 17" preserveAspectRatio="none"><ellipse cx="5.500" cy="7" rx="4.500" ry="6.500" fill="none" stroke="#d6d6d6" stroke-width="1"/><path d="M1 7h9M5.500 0.500v13" stroke="#dcdcdc" stroke-width="0.800"/><rect x="4" y="11" width="7.500" height="4" rx="2" fill="#f3f2f1" stroke="#c9c9c9" stroke-width="1"/></svg>
<div style="position:absolute;left:263.8px;top:117.47px;font-family:'Liberation Sans',sans-serif;font-size:20px;line-height:20px;color:#b8b8b8;white-space:pre;transform:scale(0.2371,0.3779);transform-origin:0 16.93px;">Link</div>
<svg style="position:absolute;left:278.8px;top:109.0px;" width="11.4" height="14.5" viewBox="0 0 12 15" preserveAspectRatio="none"><rect x="0.600" y="0.600" width="10.800" height="13.800" fill="none" stroke="#d9d9d9" stroke-width="0.800" stroke-dasharray="1.500 1"/><path d="M6 3.500l1.300 3 3.200.200-2.500 2.100.900 3.200L6 10.200 3.100 12l.900-3.200L1.500 6.700l3.200-.200z" fill="#c4c4c4"/></svg>
<div style="position:absolute;left:278.2px;top:117.47px;font-family:'Liberation Sans',sans-serif;font-size:20px;line-height:20px;color:#b8b8b8;white-space:pre;transform:scale(0.2357,0.3779);transform-origin:0 16.93px;">Action</div>
<div style="position:absolute;left:263.3px;top:137.77px;font-family:'Liberation Sans',sans-serif;font-size:20px;line-height:20px;color:#8a8a8a;white-space:pre;transform:scale(0.2078,0.3488);transform-origin:0 16.93px;">Links</div>
<svg style="position:absolute;left:303.8px;top:107.0px;" width="13.4" height="17.5" viewBox="0 0 14 18" preserveAspectRatio="none"><path d="M4 6h9.500v8.500H8L5.500 17v-2.500H4z" fill="#fcfcfc" stroke="#c2c2c2" stroke-width="1"/><path d="M4 1v8M0.500 5h7" stroke="#4c8f62" stroke-width="1.600"/></svg>
<div style="position:absolute;left:300.0px;top:117.47px;font-family:'Liberation Sans',sans-serif;font-size:20px;line-height:20px;color:#5c5c5c;white-space:pre;transform:scale(0.2457,0.3779);transform-origin:0 16.93px;">Comment</div>
<div style="position:absolute;left:300.0px;top:137.77px;font-family:'Liberation Sans',sans-serif;font-size:20px;line-height:20px;color:#8a8a8a;white-space:pre;transform:scale(0.2120,0.3488);transform-origin:0 16.93px;">Comments</div>
<svg style="position:absolute;left:330.5px;top:108.5px;" width="12.5" height="15.0" viewBox="0 0 13 15" preserveAspectRatio="none"><rect x="0.600" y="0.600" width="11.800" height="13.800" fill="#fcfcfc" stroke="#bdbdbd" stroke-width="1"/><path d="M2.500 9V5.500L3.800 4 5 5.500V9M2.500 7.300H5M7 5.500h4M7 8h4M2.500 11.500h8.500" fill="none" stroke="#8a8a8a" stroke-width="0.800"/></svg>
<div style="position:absolute;left:332.5px;top:117.47px;font-family:'Liberation Sans',sans-serif;font-size:20px;line-height:20px;color:#5c5c5c;white-space:pre;transform:scale(0.2399,0.3779);transform-origin:0 16.93px;">Text</div>
<div style="position:absolute;left:332.8px;top:126.27px;font-family:'Liberation Sans',sans-serif;font-size:20px;line-height:20px;color:#5c5c5c;white-space:pre;transform:scale(0.2379,0.3779);transform-origin:0 16.93px;">Box</div>
<svg style="position:absolute;left:350.8px;top:107.5px;" width="9.4" height="17.0" viewBox="0 0 10 17" preserveAspectRatio="none"><path d="M0.600 0.600h6L9.400 3.500v12.900H0.600z" fill="#fdfbf2" stroke="#d0cdbf" stroke-width="0.900"/><rect x="0.600" y="0.600" width="8.800" height="3" fill="#f4e7b0"/><rect x="0.600" y="13.400" width="8.800" height="3" fill="#f4e7b0"/></svg>
<div style="position:absolute;left:347.0px;top:117.47px;font-family:'Liberation Sans',sans-serif;font-size:20px;line-height:20px;color:#5c5c5c;white-space:pre;transform:scale(0.2439,0.3779);transform-origin:0 16.93px;">Header</div>
<div style="position:absolute;left:345.5px;top:126.27px;font-family:'Liberation Sans',sans-serif;font-size:20px;line-height:20px;color:#5c5c5c;white-space:pre;transform:scale(0.2451,0.3779);transform-origin:0 16.93px;">& Footer</div>
<svg style="position:absolute;left:370.5px;top:108.0px;" width="9.5" height="16.0" viewBox="0 0 10 16" preserveAspectRatio="none"><path d="M0.500 15.500L5.500 0.500h2L9.500 15.500H7.300L6.800 11H3.600L2.500 15.500z M4.200 9h2.400L6.200 4z" fill="#3b78c2" fill-rule="evenodd" transform="skewX(-8) translate(1.500 0)"/></svg>
<div style="position:absolute;left:366.2px;top:117.47px;font-family:'Liberation Sans',sans-serif;font-size:20px;line-height:20px;color:#5c5c5c;white-space:pre;transform:scale(0.2480,0.3779);transform-origin:0 16.93px;">WordArt</div>
<svg style="position:absolute;left:374.1px;top:139.9px;" width="2.4" height="1.8" viewBox="0 0 4 3" preserveAspectRatio="none"><path d="M0 0h4L2 3z" fill="#9a9a9a"/></svg>
<svg style="position:absolute;left:387.0px;top:107.5px;" width="5.0" height="7.0" viewBox="0 0 5 7" preserveAspectRatio="none"><rect x="0.400" y="0.400" width="4.200" height="6.200" fill="#eee" stroke="#999" stroke-width="0.800"/><rect x="0.400" y="0.400" width="4.200" height="2" fill="#888"/></svg>
<svg style="position:absolute;left:387.4px;top:121.5px;" width="4.2" height="6.0" viewBox="0 0 5 7" preserveAspectRatio="none"><rect x="0.400" y="0.400" width="4.200" height="6.200" fill="#f8f8f8" stroke="#aaa" stroke-width="0.800"/><path d="M2.500 2.500v2.500" stroke="#888" stroke-width="0.800"/></svg>
<svg style="position:absolute;left:387.0px;top:134.5px;" width="5.0" height="7.5" viewBox="0 0 5 7" preserveAspectRatio="none"><ellipse cx="2.500" cy="3.500" rx="2" ry="3" fill="none" stroke="#999" stroke-width="0.900"/><rect x="0.400" y="0.400" width="2.500" height="3" fill="none" stroke="#aaa" stroke-width="0.700"/></svg>
<div style="position:absolute;left:357.5px;top:137.77px;font-family:'Liberation Sans',sans-serif;font-size:20px;line-height:20px;color:#8a8a8a;white-space:pre;transform:scale(0.1718,0.3488);transform-origin:0 16.93px;">Text</div>
<svg style="position:absolute;left:403.8px;top:105.5px;" width="10.8" height="18.3" viewBox="0 0 11 18" preserveAspectRatio="none"><rect x="0.500" y="0.500" width="10" height="17" fill="#fdfdfd" stroke="#c9c9c9" stroke-width="0.900"/><path d="M2.500 13h2.200C3 11.500 2.800 7 5.500 7S8 11.500 6.300 13h2.200" fill="none" stroke="#4a78b0" stroke-width="1.100"/></svg>
<div style="position:absolute;left:400.0px;top:117.47px;font-family:'Liberation Sans',sans-serif;font-size:20px;line-height:20px;color:#5c5c5c;white-space:pre;transform:scale(0.2282,0.3779);transform-origin:0 16.93px;">Symbols</div>
<svg style="position:absolute;left:407.5px;top:139.9px;" width="2.4" height="1.8" viewBox="0 0 4 3" preserveAspectRatio="none"><path d="M0 0h4L2 3z" fill="#9a9a9a"/></svg>
<svg style="position:absolute;left:427.5px;top:108.0px;" width="10.5" height="16.5" viewBox="0 0 11 17" preserveAspectRatio="none"><rect x="0.600" y="0.600" width="9.800" height="15.800" fill="#fdfdfd" stroke="#bdbdbd" stroke-width="1"/><rect x="0.600" y="0.600" width="9.800" height="2.400" fill="#cfcfcf"/><rect x="0.600" y="14" width="9.800" height="2.400" fill="#cfcfcf"/></svg>
<div style="position:absolute;left:427.0px;top:117.47px;font-family:'Liberation Sans',sans-serif;font-size:20px;line-height:20px;color:#5c5c5c;white-space:pre;transform:scale(0.2323,0.3779);transform-origin:0 16.93px;">Video</div>
<svg style="position:absolute;left:431.6px;top:139.9px;" width="2.4" height="1.8" viewBox="0 0 4 3" preserveAspectRatio="none"><path d="M0 0h4L2 3z" fill="#9a9a9a"/></svg>
<svg style="position:absolute;left:443.8px;top:108.0px;" width="10.5" height="16.0" viewBox="0 0 11 16" preserveAspectRatio="none"><path d="M0.500 5.500h2.500L6.500 1.500v13L3 10.500H0.500z" fill="#7b7b7b"/><path d="M8 4.500c1.500 1.500 1.500 5.500 0 7M9.300 2.500c2.200 2.500 2.200 8.500 0 11" fill="none" stroke="#6f9fcf" stroke-width="1"/></svg>
<div style="position:absolute;left:442.5px;top:117.47px;font-family:'Liberation Sans',sans-serif;font-size:20px;line-height:20px;color:#5c5c5c;white-space:pre;transform:scale(0.2444,0.3779);transform-origin:0 16.93px;">Audio</div>
<svg style="position:absolute;left:447.6px;top:139.9px;" width="2.4" height="1.8" viewBox="0 0 4 3" preserveAspectRatio="none"><path d="M0 0h4L2 3z" fill="#9a9a9a"/></svg>
<svg style="position:absolute;left:462.5px;top:108.5px;" width="11.3" height="15.0" viewBox="0 0 12 15" preserveAspectRatio="none"><rect x="0.500" y="0.500" width="8" height="9" fill="#fefefe" stroke="#dedede" stroke-width="0.800"/><rect x="1" y="9" width="7" height="3.600" rx="1" fill="#5b7fa8"/><path d="M8 10.800l2.500-1.800v3.600z" fill="#5b7fa8"/><path d="M10.500 8.500v4M8.800 10.500h3.400" stroke="#7aa0c8" stroke-width="0.800"/></svg>
<div style="position:absolute;left:462.0px;top:117.47px;font-family:'Liberation Sans',sans-serif;font-size:20px;line-height:20px;color:#5c5c5c;white-space:pre;transform:scale(0.2052,0.3779);transform-origin:0 16.93px;">Screen</div>
<div style="position:absolute;left:458.0px;top:126.27px;font-family:'Liberation Sans',sans-serif;font-size:20px;line-height:20px;color:#5c5c5c;white-space:pre;transform:scale(0.2337,0.3779);transform-origin:0 16.93px;">Recording</div>
<div style="position:absolute;left:446.8px;top:137.77px;font-family:'Liberation Sans',sans-serif;font-size:20px;line-height:20px;color:#8a8a8a;white-space:pre;transform:scale(0.2056,0.3488);transform-origin:0 16.93px;">Media</div>
<svg style="position:absolute;left:497.6px;top:151.0px;" width="3.6" height="3.0" viewBox="0 0 4 3" preserveAspectRatio="none"><path d="M0.300 2.700L2 0.500L3.700 2.700" fill="none" stroke="#8a8a8a" stroke-width="0.800"/></svg>
<div style="position:absolute;left:0.0px;top:155.6px;width:504.4px;height:291.5px;background:#e5e5e5;"></div>
<div style="position:absolute;left:0.0px;top:155.6px;width:504.4px;height:1.2px;background:#dedede;"></div>
<div style="position:absolute;left:69.8px;top:157.0px;width:7.0px;height:289.0px;background:#d8d8d8;"></div>
<div style="position:absolute;left:70.3px;top:158.5px;width:6.0px;height:150.0px;background:#f4f4f4;"></div>
<div style="position:absolute;left:70.3px;top:157.2px;width:6.0px;height:5.5px;background:#fafafa;"></div>
<svg style="position:absolute;left:72.1px;top:159.1px;" width="2.4" height="1.8" viewBox="0 0 4 3" preserveAspectRatio="none"><path d="M0 0h4L2 3z" fill="#888"/></svg>
<div style="position:absolute;left:70.5px;top:438.2px;width:5.8px;height:6.8px;background:#fbfbfb;"></div>
<svg style="position:absolute;left:72.2px;top:440.9px;" width="2.4" height="1.8" viewBox="0 0 4 3" preserveAspectRatio="none"><path d="M0 0h4L2 3z" fill="#777"/></svg>
<div style="position:absolute;left:77.3px;top:157.0px;width:0.8px;height:289.0px;background:#efefef;"></div>
<div style="position:absolute;left:498.2px;top:157.0px;width:6.2px;height:289.5px;background:#d4d4d4;"></div>
<div style="position:absolute;left:498.2px;top:157.0px;width:6.2px;height:30.6px;background:#fafafa;"></div>
<div style="position:absolute;left:498.2px;top:387.3px;width:6.2px;height:30.0px;background:#f8f8f8;"></div>
<div style="position:absolute;left:498.2px;top:417.3px;width:6.2px;height:11.0px;background:#ececec;"></div>
<div style="position:absolute;left:498.2px;top:428.3px;width:6.2px;height:18.2px;background:#f8f8f8;"></div>
<svg style="position:absolute;left:500.1px;top:160.6px;" width="2.4" height="1.8" viewBox="0 0 4 3" preserveAspectRatio="none"><path d="M0 0h4L2 3z" fill="#8a8a8a"/></svg>
<svg style="position:absolute;left:500.1px;top:390.7px;" width="2.4" height="1.8" viewBox="0 0 4 3" preserveAspectRatio="none"><path d="M0 0h4L2 3z" fill="#777"/></svg>
<svg style="position:absolute;left:500.1px;top:400.1px;" width="2.4" height="1.8" viewBox="0 0 4 3" preserveAspectRatio="none"><path d="M0 0h4L2 3z" fill="#777"/></svg>
<svg style="position:absolute;left:500.1px;top:409.5px;" width="2.4" height="1.8" viewBox="0 0 4 3" preserveAspectRatio="none"><path d="M0 0h4L2 3z" fill="#777"/></svg>
<svg style="position:absolute;left:500.1px;top:441.5px;" width="2.4" height="1.8" viewBox="0 0 4 3" preserveAspectRatio="none"><path d="M0 0h4L2 3z" fill="#777"/></svg>
<svg style="position:absolute;left:500.1px;top:433.0px;" width="2.4" height="1.8" viewBox="0 0 4 3" preserveAspectRatio="none"><path d="M0 3h4L2 0z" fill="#777"/></svg>
<div style="position:absolute;left:129.6px;top:161.8px;width:317.6px;height:259.8px;background:#fff;box-shadow:0 0 1px rgba(0,0,0,.25);"></div>
<div style="position:absolute;left:78.0px;top:429.3px;width:420.0px;height:0.7px;background:#d9d9d9;"></div>
<div style="position:absolute;left:82.2px;top:422.77px;font-family:'Liberation Sans',sans-serif;font-size:20px;line-height:20px;color:#7a7a7a;white-space:pre;transform:scale(0.2906,0.4215);transform-origin:0 16.93px;">Click to add notes</div>
<div style="position:absolute;left:0.0px;top:446.5px;width:504.4px;height:13.3px;background:#f0f0f0;"></div>
<div style="position:absolute;left:-0.5px;top:438.97px;font-family:'Liberation Sans',sans-serif;font-size:20px;line-height:20px;color:#5c5c5c;white-space:pre;transform:scale(0.2177,0.3488);transform-origin:0 16.93px;">Slide 1 of 10</div>
<svg style="position:absolute;left:31.0px;top:450.5px;" width="4.6" height="6.0" viewBox="0 0 5 6" preserveAspectRatio="none"><rect x="0.400" y="0.400" width="4.200" height="5.200" fill="none" stroke="#999" stroke-width="0.800"/></svg>
<div style="position:absolute;left:43.2px;top:438.97px;font-family:'Liberation Sans',sans-serif;font-size:20px;line-height:20px;color:#5c5c5c;white-space:pre;transform:scale(0.2019,0.3488);transform-origin:0 16.93px;">English (United States)</div>
<svg style="position:absolute;left:306.0px;top:450.0px;" width="3.5" height="7.0" viewBox="0 0 4 7" preserveAspectRatio="none"><path d="M2 0.500v4M0.500 6.500h3L2 4.500z" stroke="#888" fill="#888" stroke-width="0.700"/></svg>
<div style="position:absolute;left:312.4px;top:439.27px;font-family:'Liberation Sans',sans-serif;font-size:20px;line-height:20px;color:#5c5c5c;white-space:pre;transform:scale(0.2010,0.3488);transform-origin:0 16.93px;">Notes</div>
<svg style="position:absolute;left:330.4px;top:450.5px;" width="5.8" height="6.5" viewBox="0 0 6 7" preserveAspectRatio="none"><path d="M0.300 0.300h5.400v4.400H2.500L1 6.500V4.700H0.300z" fill="#555"/></svg>
<div style="position:absolute;left:337.5px;top:439.27px;font-family:'Liberation Sans',sans-serif;font-size:20px;line-height:20px;color:#5c5c5c;white-space:pre;transform:scale(0.2058,0.3488);transform-origin:0 16.93px;">Comments</div>
<div style="position:absolute;left:365.5px;top:447.0px;width:14.5px;height:12.5px;background:#cdcdcd;"></div>
<svg style="position:absolute;left:370.0px;top:450.0px;" width="5.5" height="7.5" viewBox="0 0 6 8" preserveAspectRatio="none"><rect x="0.400" y="0.400" width="5.200" height="7.200" fill="none" stroke="#8a8a8a" stroke-width="0.800"/><path d="M2 0.400v7.200" stroke="#8a8a8a" stroke-width="0.800"/></svg>
<svg style="position:absolute;left:385.5px;top:450.0px;" width="5.5" height="7.5" viewBox="0 0 6 8" preserveAspectRatio="none"><path d="M0.400 0.400h2v3h-2zM3.600 0.400h2v3h-2zM0.400 4.600h2v3h-2zM3.600 4.600h2v3h-2z" fill="none" stroke="#a0a0a0" stroke-width="0.700"/></svg>
<svg style="position:absolute;left:401.5px;top:450.0px;" width="5.5" height="7.5" viewBox="0 0 6 8" preserveAspectRatio="none"><path d="M0.400 0.400h2.200v7.200H0.400zM3.400 0.400h2.200v7.200H3.400z" fill="none" stroke="#a0a0a0" stroke-width="0.700"/></svg>
<svg style="position:absolute;left:417.0px;top:449.5px;" width="5.5" height="8.5" viewBox="0 0 6 9" preserveAspectRatio="none"><path d="M0.400 0.400h5.200v4.600H0.400zM3 5v3M1.500 8.500h3" fill="none" stroke="#9a9a9a" stroke-width="0.800"/></svg>
<div style="position:absolute;left:430.5px;top:453.3px;width:2.2px;height:0.8px;background:#999;"></div>
<div style="position:absolute;left:434.5px;top:453.4px;width:40.0px;height:0.7px;background:#b5b5b5;"></div>
<div style="position:absolute;left:446.5px;top:450.3px;width:1.4px;height:7.0px;background:#666;"></div>
<div style="position:absolute;left:454.2px;top:452.0px;width:0.6px;height:3.5px;background:#aaa;"></div>
<div style="position:absolute;left:477.0px;top:453.3px;width:2.4px;height:0.8px;background:#999;"></div>
<div style="position:absolute;left:477.8px;top:452.0px;width:0.8px;height:3.4px;background:#999;"></div>
<div style="position:absolute;left:484.6px;top:439.27px;font-family:'Liberation Sans',sans-serif;font-size:20px;line-height:20px;color:#5c5c5c;white-space:pre;transform:scale(0.2099,0.3488);transform-origin:0 16.93px;">52%</div>
<svg style="position:absolute;left:498.3px;top:450.5px;" width="4.4" height="6.5" viewBox="0 0 5 7" preserveAspectRatio="none"><rect x="0.400" y="0.400" width="4.200" height="6.200" fill="none" stroke="#9a9a9a" stroke-width="0.800"/></svg>
<div style="position:absolute;left:2.6px;top:157.37px;font-family:'Liberation Sans',sans-serif;font-size:20px;line-height:20px;color:#c4654f;white-space:pre;transform:scale(0.2518,0.4070);transform-origin:0 16.93px;">1</div>
<div style="position:absolute;left:2.6px;top:210.37px;font-family:'Liberation Sans',sans-serif;font-size:20px;line-height:20px;color:#888;white-space:pre;transform:scale(0.2518,0.4070);transform-origin:0 16.93px;">2</div>
<div style="position:absolute;left:2.6px;top:263.87px;font-family:'Liberation Sans',sans-serif;font-size:20px;line-height:20px;color:#888;white-space:pre;transform:scale(0.2518,0.4070);transform-origin:0 16.93px;">3</div>
<div style="position:absolute;left:2.6px;top:317.37px;font-family:'Liberation Sans',sans-serif;font-size:20px;line-height:20px;color:#888;white-space:pre;transform:scale(0.2518,0.4070);transform-origin:0 16.93px;">4</div>
<div style="position:absolute;left:2.6px;top:370.87px;font-family:'Liberation Sans',sans-serif;font-size:20px;line-height:20px;color:#888;white-space:pre;transform:scale(0.2518,0.4070);transform-origin:0 16.93px;">5</div>
<div style="position:absolute;left:2.6px;top:423.87px;font-family:'Liberation Sans',sans-serif;font-size:20px;line-height:20px;color:#888;white-space:pre;transform:scale(0.2518,0.4070);transform-origin:0 16.93px;">6</div>
<div style="position:absolute;left:10.5px;top:166.2px;width:53.0px;height:44.8px;background:#f0d9d4;border-radius:1px;"></div>
<div style="position:absolute;left:11.0px;top:166.7px;width:52.0px;height:43.8px;background:#fff;border:1.500px solid #6e312c;"></div>
<div style="position:absolute;left:16.5px;top:178.0px;width:40.5px;height:13.3px;background:#d4d4d4;"></div>
<div style="position:absolute;left:17.5px;top:167.17px;font-family:'Liberation Serif',sans-serif;font-size:20px;line-height:20px;color:#2e2e2e;white-space:pre;transform:scale(0.1666,0.3198);transform-origin:0 16.93px;font-weight:bold;-webkit-text-stroke:0.800px #2e2e2e;">INTERVIEW SKILLS</div>
<svg style="position:absolute;left:18.0px;top:185.2px;overflow:visible;" width="32.0" height="4.6" viewBox="0 0 1000 95.3" preserveAspectRatio="none"><path d="M563 88L563 95L569 95L569 88ZM679 86L679 92L686 92L686 86ZM916 79L916 86L922 86L922 79ZM904 79L904 86L911 86L911 79ZM832 79L832 86L838 86L838 79ZM821 79L821 86L827 86L827 79ZM540 79L540 86L546 86L546 79ZM528 79L528 86L535 86L535 79ZM306 79L306 86L312 86L312 79ZM295 79L295 86L301 86L301 79ZM569 77L569 83L575 83L575 77ZM557 77L557 83L563 83L563 77ZM685 75L685 81L692 81L692 75ZM674 75L674 81L680 81L680 75ZM105 47L98 47L99 52L100 62L98 69L96 73L90 79L82 84L73 86L64 87L64 95L77 93L86 91L93 87L101 81L106 72L108 63L108 55ZM862 44L854 45L854 58L850 63L847 64L838 63L834 60L834 44L825 44L825 59L822 63L818 64L812 64L807 60L801 46L793 46L798 59L796 72L793 79L789 83L782 86L771 86L764 84L760 80L759 76L759 65L760 58L753 58L751 64L751 80L754 86L758 89L763 92L773 95L785 93L793 90L799 84L804 76L806 70L809 72L822 72L828 69L830 67L833 70L837 72L850 72L856 70L859 66L862 60ZM770 40L770 46L777 46L777 40ZM244 40L244 46L251 46L251 40ZM59 38L50 34L40 34L31 37L27 43L28 50L31 54L37 57L46 60L50 63L50 64L49 67L44 72L36 75L23 77L14 75L9 71L8 67L11 56L3 56L0 64L0 69L2 75L7 80L15 84L33 83L50 78L57 72L59 67L58 62L53 55L38 50L35 46L38 42L43 40L49 41L53 44L53 46L62 46ZM970 28L970 35L976 35L976 28ZM959 28L959 35L964 35L964 28ZM413 38L412 35L407 29L401 27L393 28L386 33L384 38L384 46L386 50L389 53L394 55L401 55L404 53L405 54L404 57L399 62L388 64L372 64L367 62L364 56L364 44L357 44L356 59L354 62L349 64L341 63L337 60L336 57L336 44L328 45L328 58L324 63L321 64L312 63L308 60L308 44L299 44L299 59L296 63L292 64L285 63L280 59L275 46L267 46L272 58L272 68L269 77L264 83L258 86L250 87L243 86L237 83L235 81L233 75L233 66L234 58L227 58L225 66L225 77L228 85L234 91L241 93L254 95L263 92L268 89L276 80L280 70L283 72L296 72L302 69L304 67L307 70L311 72L324 72L328 70L332 67L334 69L340 72L353 72L360 68L369 72L398 71L405 68L409 64L412 58L414 50ZM396 36L401 36L405 40L405 44L401 49L397 49L392 44L392 40ZM855 26L855 33L861 33L861 26ZM363 26L363 33L370 33L370 26ZM351 26L351 32L358 33L358 26ZM329 26L329 33L335 33L335 26ZM818 22L826 36L833 36L841 22L836 22L830 31L824 22ZM525 22L534 36L541 36L550 22L544 22L537 31L531 22ZM292 22L300 36L307 36L315 22L309 22L304 31L298 22ZM964 17L964 23L970 23L970 17ZM607 12L607 18L613 18L613 12ZM595 12L595 18L601 18L601 12ZM395 12L395 18L402 18L402 12ZM428 56L428 63L430 65L434 67L443 69L450 67L455 65L459 69L464 72L492 71L496 69L500 65L502 62L509 69L515 72L530 72L534 70L537 68L545 72L559 72L566 68L574 72L599 72L608 69L614 64L618 54L619 41L617 35L612 29L609 27L600 27L595 30L591 33L589 38L589 46L591 50L595 53L599 55L607 55L609 53L611 54L609 57L602 63L593 64L575 63L573 62L570 59L570 44L562 44L562 57L560 61L557 63L549 64L544 62L542 59L541 44L534 44L534 56L531 62L526 64L516 63L509 57L484 25L485 23L487 21L515 9L515 1L480 15L476 21L476 27L477 30L494 51L495 57L491 63L486 64L467 64L463 63L460 58L459 54L457 38L449 38L449 41L442 43L436 46L430 51ZM450 48L452 58L451 60L441 62L435 59L436 56L441 50L446 48ZM601 36L607 36L611 40L611 44L607 49L602 49L598 44L598 40ZM880 0L880 59L882 66L886 70L892 72L905 72L914 68L921 72L936 72L941 70L946 66L952 72L961 73L967 70L971 63L973 67L976 70L981 73L986 73L992 70L997 64L999 53L999 38L991 38L991 56L989 61L986 64L980 63L978 59L975 52L975 44L967 44L966 58L960 64L956 64L951 59L949 54L949 44L941 45L941 56L936 63L933 64L924 64L919 61L917 57L917 44L909 44L909 56L907 62L902 64L895 64L891 62L888 56L888 0ZM636 0L636 60L637 65L641 69L647 72L663 72L672 70L681 66L692 57L706 50L706 43L702 41L682 36L671 34L663 35L663 43L679 43L694 47L673 62L661 64L650 64L647 63L644 60L643 57L643 0ZM601 0L601 7L607 7L607 0ZM123 0L123 60L125 65L128 69L134 72L160 72L167 69L170 66L173 62L174 52L170 44L158 30L155 24L158 21L186 9L187 1L155 14L149 18L147 22L147 29L164 50L166 57L164 60L160 63L138 64L134 63L132 60L131 57L131 0Z" fill="#444" fill-rule="evenodd" stroke="#444" stroke-width="14"/></svg>
<div style="position:absolute;left:51.3px;top:179.3px;width:4.8px;height:10.0px;background:#fafafa;border-radius:50%;"></div>
<div style="position:absolute;left:52.4px;top:180.8px;width:2.6px;height:4.4px;background:#9fb7a2;border-radius:50%;"></div>
<div style="position:absolute;left:51.9px;top:192.5px;width:3.4px;height:6.0px;background:#b8573c;border-radius:50%;"></div>
<div style="position:absolute;left:48.0px;top:200.8px;width:9.5px;height:0.8px;background:#c9c9c9;"></div>
<div style="position:absolute;left:45.0px;top:203.3px;width:12.5px;height:0.8px;background:#cfcfcf;"></div>
<div style="position:absolute;left:43.0px;top:205.7px;width:14.5px;height:0.8px;background:#cfcfcf;"></div>
<div style="position:absolute;left:12.8px;top:221.7px;width:48.2px;height:40.6px;background:#fdfdfd;"></div>
<div style="position:absolute;left:27.9px;top:227.3px;width:9.0px;height:3.0px;background:#6d6d6d;"></div>
<div style="position:absolute;left:38.3px;top:227.8px;width:8.0px;height:2.0px;background:#aaa;"></div>
<div style="position:absolute;left:17.6px;top:236.0px;width:4.5px;height:1.3px;background:#808080;"></div>
<div style="position:absolute;left:22.9px;top:236.1px;width:2.5px;height:1.0px;background:#c8c8c8;"></div>
<div style="position:absolute;left:17.6px;top:238.8px;width:8.0px;height:1.3px;background:#808080;"></div>
<div style="position:absolute;left:26.4px;top:238.9px;width:5.0px;height:1.0px;background:#c8c8c8;"></div>
<div style="position:absolute;left:17.6px;top:241.6px;width:10.0px;height:1.3px;background:#808080;"></div>
<div style="position:absolute;left:28.4px;top:241.7px;width:9.0px;height:1.0px;background:#c8c8c8;"></div>
<div style="position:absolute;left:17.6px;top:244.4px;width:7.0px;height:1.3px;background:#808080;"></div>
<div style="position:absolute;left:25.4px;top:244.5px;width:3.5px;height:1.0px;background:#c8c8c8;"></div>
<div style="position:absolute;left:17.6px;top:247.2px;width:9.0px;height:1.3px;background:#808080;"></div>
<div style="position:absolute;left:27.4px;top:247.3px;width:6.0px;height:1.0px;background:#c8c8c8;"></div>
<div style="position:absolute;left:17.6px;top:250.0px;width:4.0px;height:1.3px;background:#808080;"></div>
<div style="position:absolute;left:22.4px;top:250.1px;width:4.0px;height:1.0px;background:#c8c8c8;"></div>
<div style="position:absolute;left:17.6px;top:252.8px;width:9.0px;height:1.3px;background:#808080;"></div>
<div style="position:absolute;left:27.4px;top:252.9px;width:4.5px;height:1.0px;background:#c8c8c8;"></div>
<div style="position:absolute;left:17.6px;top:255.4px;width:1.5px;height:1.3px;background:#808080;"></div>
<div style="position:absolute;left:58.3px;top:257.5px;width:0.9px;height:2.4px;background:#555;"></div>
<div style="position:absolute;left:12.8px;top:274.4px;width:48.2px;height:41.2px;background:#fdfdfd;"></div>
<div style="position:absolute;left:25.8px;top:280.6px;width:13.0px;height:3.0px;background:#6d6d6d;"></div>
<div style="position:absolute;left:40.5px;top:281.0px;width:10.0px;height:2.0px;background:#a8a8a8;"></div>
<div style="position:absolute;left:33.0px;top:291.3px;width:23.8px;height:2.0px;background:#7a7a7a;"></div>
<div style="position:absolute;left:33.0px;top:296.5px;width:23.8px;height:2.0px;background:#7a7a7a;"></div>
<div style="position:absolute;left:42.4px;top:301.7px;width:14.4px;height:1.8px;background:#909090;"></div>
<svg style="position:absolute;left:13.8px;top:300.0px;" width="16.0" height="13.5" viewBox="0 0 16 14" preserveAspectRatio="none"><g opacity=".9"><ellipse cx="4" cy="4.500" rx="1.300" ry="2" fill="#4a3a38"/><path d="M2 14V8.500C2 6 6 6 6 8.500V14z" fill="#b43e3a"/><ellipse cx="11.500" cy="4.500" rx="1.300" ry="2" fill="#4a3a38"/><path d="M9.500 14V8.500c0-2.500 4-2.500 4 0V14z" fill="#3c3c46"/><path d="M0.500 9l1.500 5M14 8l1.500-4" stroke="#c85a55" stroke-width="0.800"/><rect x="6.500" y="9" width="3" height="5" fill="#d9b0a8"/></g></svg>
<div style="position:absolute;left:58.3px;top:311.5px;width:0.9px;height:2.4px;background:#555;"></div>
<div style="position:absolute;left:12.8px;top:328.6px;width:48.2px;height:39.2px;background:#fdfdfd;"></div>
<div style="position:absolute;left:27.9px;top:334.2px;width:9.5px;height:3.0px;background:#6d6d6d;"></div>
<div style="position:absolute;left:38.8px;top:334.7px;width:6.5px;height:2.0px;background:#aaa;"></div>
<div style="position:absolute;left:14.2px;top:346.4px;width:19.4px;height:19.4px;background:radial-gradient(ellipse at 50% 55%,#6a3a28 0,#8c4a2e 28%,#c0602f 55%,#c66a38 100%);border-radius:50%;"></div>
<div style="position:absolute;left:20.0px;top:352.5px;width:8.0px;height:8.0px;background:rgba(240,220,210,.55);border-radius:40%;"></div>
<div style="position:absolute;left:35.0px;top:343.5px;width:21.8px;height:1.1px;background:#cfcfcf;"></div>
<div style="position:absolute;left:39.0px;top:349.3px;width:17.8px;height:1.1px;background:#cfcfcf;"></div>
<div style="position:absolute;left:37.0px;top:354.7px;width:19.8px;height:1.1px;background:#cfcfcf;"></div>
<div style="position:absolute;left:40.0px;top:360.0px;width:16.8px;height:1.1px;background:#cfcfcf;"></div>
<div style="position:absolute;left:58.3px;top:364.0px;width:0.9px;height:2.4px;background:#555;"></div>
<div style="position:absolute;left:12.8px;top:381.5px;width:48.2px;height:39.6px;background:#fdfdfd;"></div>
<div style="position:absolute;left:21.6px;top:384.8px;width:21.0px;height:2.8px;background:#6a6a6a;"></div>
<div style="position:absolute;left:44.0px;top:385.2px;width:9.5px;height:2.0px;background:#a5a5a5;"></div>
<div style="position:absolute;left:32.0px;top:389.7px;width:10.5px;height:1.8px;background:#a8a8a8;"></div>
<div style="position:absolute;left:16.5px;top:393.2px;width:40.8px;height:5.6px;background:#c0552b;"></div>
<div style="position:absolute;left:16.5px;top:398.8px;width:40.8px;height:4.7px;background:#f3d6cd;"></div>
<div style="position:absolute;left:16.5px;top:403.5px;width:40.8px;height:4.7px;background:#f9ebe7;"></div>
<div style="position:absolute;left:16.5px;top:408.2px;width:40.8px;height:4.7px;background:#f3d6cd;"></div>
<div style="position:absolute;left:16.5px;top:412.9px;width:40.8px;height:4.7px;background:#f9ebe7;"></div>
<div style="position:absolute;left:22.0px;top:400.8px;width:10.0px;height:0.9px;background:#d8b0a6;"></div>
<div style="position:absolute;left:44.5px;top:400.8px;width:4.5px;height:0.9px;background:#d8b0a6;"></div>
<div style="position:absolute;left:22.0px;top:405.5px;width:10.0px;height:0.9px;background:#d8b0a6;"></div>
<div style="position:absolute;left:44.5px;top:405.5px;width:4.5px;height:0.9px;background:#d8b0a6;"></div>
<div style="position:absolute;left:22.0px;top:410.2px;width:10.0px;height:0.9px;background:#d8b0a6;"></div>
<div style="position:absolute;left:44.5px;top:410.2px;width:4.5px;height:0.9px;background:#d8b0a6;"></div>
<div style="position:absolute;left:22.0px;top:414.9px;width:10.0px;height:0.9px;background:#d8b0a6;"></div>
<div style="position:absolute;left:44.5px;top:414.9px;width:4.5px;height:0.9px;background:#d8b0a6;"></div>
<div style="position:absolute;left:58.3px;top:417.3px;width:0.9px;height:2.4px;background:#555;"></div>
<div style="position:absolute;left:12.8px;top:434.1px;width:48.2px;height:12.4px;background:#fdfdfd;"></div>
<div style="position:absolute;left:21.0px;top:440.2px;width:18.5px;height:3.0px;background:#555;"></div>
<div style="position:absolute;left:40.5px;top:440.6px;width:13.0px;height:2.0px;background:#999;"></div>
<svg style="position:absolute;left:154px;top:213.300px" width="265.500" height="114.700" viewBox="0 0 265.500 114.700"><defs><filter id="nz" x="0" y="0" width="100%" height="100%"><feTurbulence type="fractalNoise" baseFrequency="0.3 0.12" numOctaves="2" seed="7" result="n"/><feColorMatrix in="n" type="matrix" values="0 0 0 0 0.780  0 0 0 0 0.780  0 0 0 0 0.780  0.900 0.900 0 0 -0.550"/><feComposite operator="in" in2="SourceGraphic"/></filter></defs><rect width="265.500" height="114.700" fill="#cfcfcf"/><rect width="265.500" height="114.700" fill="#a4a4a4" filter="url(#nz)" opacity=".6"/><rect x="0" y="2.300" width="265.500" height="3.200" fill="#f3f3f3"/><rect x="0" y="107.900" width="265.500" height="3.300" fill="#f5f5f5"/><rect x="0" y="111.200" width="265.500" height="3.500" fill="#dcdcdc" opacity=".8"/></svg>
<div style="position:absolute;left:160.3px;top:234.10px;font-family:'Liberation Serif',serif;font-weight:bold;font-size:40px;line-height:40px;letter-spacing:2.2px;color:#1c1c1c;white-space:pre;transform:scale(0.4566,1.2634);transform-origin:0 33.50px;-webkit-text-stroke:1.1px #1c1c1c;text-shadow:1.200px 0.600px 1px rgba(0,0,0,.35);">INTERVIEW</div>
<div style="position:absolute;left:290.5px;top:234.10px;font-family:'Liberation Serif',serif;font-weight:bold;font-size:40px;line-height:40px;letter-spacing:2.2px;color:#1c1c1c;white-space:pre;transform:scale(0.4379,1.2634);transform-origin:0 33.50px;-webkit-text-stroke:1.1px #1c1c1c;text-shadow:1.200px 0.600px 1px rgba(0,0,0,.35);">SKILLS</div>
<svg style="position:absolute;left:159.6px;top:278.3px;filter:drop-shadow(0.800px 0.600px 0.600px rgba(0,0,0,.4));overflow:visible;" width="196.1" height="31.0" viewBox="0 0 1000 95.3" preserveAspectRatio="none"><path d="M563 88L563 95L569 95L569 88ZM679 86L679 92L686 92L686 86ZM916 79L916 86L922 86L922 79ZM904 79L904 86L911 86L911 79ZM832 79L832 86L838 86L838 79ZM821 79L821 86L827 86L827 79ZM540 79L540 86L546 86L546 79ZM528 79L528 86L535 86L535 79ZM306 79L306 86L312 86L312 79ZM295 79L295 86L301 86L301 79ZM569 77L569 83L575 83L575 77ZM557 77L557 83L563 83L563 77ZM685 75L685 81L692 81L692 75ZM674 75L674 81L680 81L680 75ZM105 47L98 47L99 52L100 62L98 69L96 73L90 79L82 84L73 86L64 87L64 95L77 93L86 91L93 87L101 81L106 72L108 63L108 55ZM862 44L854 45L854 58L850 63L847 64L838 63L834 60L834 44L825 44L825 59L822 63L818 64L812 64L807 60L801 46L793 46L798 59L796 72L793 79L789 83L782 86L771 86L764 84L760 80L759 76L759 65L760 58L753 58L751 64L751 80L754 86L758 89L763 92L773 95L785 93L793 90L799 84L804 76L806 70L809 72L822 72L828 69L830 67L833 70L837 72L850 72L856 70L859 66L862 60ZM770 40L770 46L777 46L777 40ZM244 40L244 46L251 46L251 40ZM59 38L50 34L40 34L31 37L27 43L28 50L31 54L37 57L46 60L50 63L50 64L49 67L44 72L36 75L23 77L14 75L9 71L8 67L11 56L3 56L0 64L0 69L2 75L7 80L15 84L33 83L50 78L57 72L59 67L58 62L53 55L38 50L35 46L38 42L43 40L49 41L53 44L53 46L62 46ZM970 28L970 35L976 35L976 28ZM959 28L959 35L964 35L964 28ZM413 38L412 35L407 29L401 27L393 28L386 33L384 38L384 46L386 50L389 53L394 55L401 55L404 53L405 54L404 57L399 62L388 64L372 64L367 62L364 56L364 44L357 44L356 59L354 62L349 64L341 63L337 60L336 57L336 44L328 45L328 58L324 63L321 64L312 63L308 60L308 44L299 44L299 59L296 63L292 64L285 63L280 59L275 46L267 46L272 58L272 68L269 77L264 83L258 86L250 87L243 86L237 83L235 81L233 75L233 66L234 58L227 58L225 66L225 77L228 85L234 91L241 93L254 95L263 92L268 89L276 80L280 70L283 72L296 72L302 69L304 67L307 70L311 72L324 72L328 70L332 67L334 69L340 72L353 72L360 68L369 72L398 71L405 68L409 64L412 58L414 50ZM396 36L401 36L405 40L405 44L401 49L397 49L392 44L392 40ZM855 26L855 33L861 33L861 26ZM363 26L363 33L370 33L370 26ZM351 26L351 32L358 33L358 26ZM329 26L329 33L335 33L335 26ZM818 22L826 36L833 36L841 22L836 22L830 31L824 22ZM525 22L534 36L541 36L550 22L544 22L537 31L531 22ZM292 22L300 36L307 36L315 22L309 22L304 31L298 22ZM964 17L964 23L970 23L970 17ZM607 12L607 18L613 18L613 12ZM595 12L595 18L601 18L601 12ZM395 12L395 18L402 18L402 12ZM428 56L428 63L430 65L434 67L443 69L450 67L455 65L459 69L464 72L492 71L496 69L500 65L502 62L509 69L515 72L530 72L534 70L537 68L545 72L559 72L566 68L574 72L599 72L608 69L614 64L618 54L619 41L617 35L612 29L609 27L600 27L595 30L591 33L589 38L589 46L591 50L595 53L599 55L607 55L609 53L611 54L609 57L602 63L593 64L575 63L573 62L570 59L570 44L562 44L562 57L560 61L557 63L549 64L544 62L542 59L541 44L534 44L534 56L531 62L526 64L516 63L509 57L484 25L485 23L487 21L515 9L515 1L480 15L476 21L476 27L477 30L494 51L495 57L491 63L486 64L467 64L463 63L460 58L459 54L457 38L449 38L449 41L442 43L436 46L430 51ZM450 48L452 58L451 60L441 62L435 59L436 56L441 50L446 48ZM601 36L607 36L611 40L611 44L607 49L602 49L598 44L598 40ZM880 0L880 59L882 66L886 70L892 72L905 72L914 68L921 72L936 72L941 70L946 66L952 72L961 73L967 70L971 63L973 67L976 70L981 73L986 73L992 70L997 64L999 53L999 38L991 38L991 56L989 61L986 64L980 63L978 59L975 52L975 44L967 44L966 58L960 64L956 64L951 59L949 54L949 44L941 45L941 56L936 63L933 64L924 64L919 61L917 57L917 44L909 44L909 56L907 62L902 64L895 64L891 62L888 56L888 0ZM636 0L636 60L637 65L641 69L647 72L663 72L672 70L681 66L692 57L706 50L706 43L702 41L682 36L671 34L663 35L663 43L679 43L694 47L673 62L661 64L650 64L647 63L644 60L643 57L643 0ZM601 0L601 7L607 7L607 0ZM123 0L123 60L125 65L128 69L134 72L160 72L167 69L170 66L173 62L174 52L170 44L158 30L155 24L158 21L186 9L187 1L155 14L149 18L147 22L147 29L164 50L166 57L164 60L160 63L138 64L134 63L132 60L131 57L131 0Z" fill="#1e1e1e" fill-rule="evenodd" stroke="#1e1e1e" stroke-width="2"/></svg>
<div style="position:absolute;left:362.0px;top:221.0px;width:56.5px;height:94.0px;background:radial-gradient(ellipse closest-side,#fff 0,#fff 78%,rgba(255,255,255,.8) 88%,rgba(255,255,255,0) 100%);"></div>
<svg style="position:absolute;left:372.0px;top:227.0px;" width="36.0" height="88.0" viewBox="0 0 36 88" preserveAspectRatio="none"><defs><filter id="bb"><feGaussianBlur stdDeviation="0.45"/></filter></defs><g filter="url(#bb)">
<path d="M18 2 A16 24.500 0 0 1 34 26.500 C34 38 26 44 24 53 H12 C10 44 2 38 2 26.500 A16 24.500 0 0 1 18 2Z" fill="#fff"/>
<g fill="none" stroke-width="4.200">
<path d="M8 9 A16 24.500 0 0 1 18 2.300" stroke="#5b9bd8"/>
<path d="M18 2.300 A16 24.500 0 0 1 28 9" stroke="#6cc07a"/>
<path d="M28 9 A16 24.500 0 0 1 33.800 24" stroke="#3f9b52"/>
<path d="M33.800 24 C34 33 30 39 27 44" stroke="#8fcf6a"/>
<path d="M27 44 C25.500 47 24.500 50 24 53" stroke="#e8c840"/>
<path d="M8 9 A16 24.500 0 0 0 2.200 24" stroke="#8cc0e6"/>
<path d="M2.200 24 C2 31 5 36 8 41" stroke="#ead64a"/>
<path d="M8 41 C10 45 11.500 49 12 53" stroke="#e8923a"/>
<path d="M12.500 51 L23.500 51" stroke="#dc4a38" stroke-width="4"/>
</g>
<ellipse cx="18" cy="25" rx="11.500" ry="17.500" fill="#fff"/>
<path d="M10.500 27 L18 22.500 L25.500 27 L18 31.500Z" fill="#111"/><path d="M13.500 30.500v6c2.500 3 6.500 3 9 0v-6L18 33z" fill="#1b1b1b"/><rect x="24.800" y="27.500" width="1.200" height="9" fill="#222"/>
<rect x="11.800" y="53" width="12.400" height="3.200" fill="#e9e9e9"/><rect x="11.800" y="56.200" width="12.400" height="2.600" fill="#bdbdbd"/><rect x="11.800" y="58.800" width="12.400" height="3.200" fill="#efefef"/><rect x="11.800" y="62" width="12.400" height="2.600" fill="#c4c4c4"/><rect x="12.500" y="64.600" width="11" height="2.400" fill="#eee"/>
<rect x="14.300" y="67" width="7.400" height="11" fill="#d9a3d6"/><rect x="16.800" y="67" width="2.400" height="11" fill="#e6bfe4"/>
<path d="M14.300 78 H21.700 L18 86.500Z" fill="#d9b98c"/><path d="M16.800 83.500 H19.200 L18 86.800Z" fill="#333"/>
</g></svg>
<div style="position:absolute;left:384.4px;top:227.67px;font-family:'Liberation Serif',sans-serif;font-size:20px;line-height:20px;color:#222;white-space:pre;transform:scale(0.2631,0.4070);transform-origin:0 16.93px;font-weight:bold;">CDC</div>
<div style="position:absolute;left:387.3px;top:251.87px;font-family:'Liberation Serif',sans-serif;font-size:20px;line-height:20px;color:#777;white-space:pre;transform:scale(0.1944,0.2180);transform-origin:0 16.93px;">DZ</div>
<div style="position:absolute;left:381.0px;top:315.0px;width:27.0px;height:41.8px;background:radial-gradient(ellipse closest-side,#b8431e 0,#b13c19 55%,#c7582f 68%,#a83516 80%,#d98a66 88%,#9c2f12 96%,rgba(150,45,18,.6) 100%);border-radius:50%;"></div>
<div style="position:absolute;left:386.5px;top:320.5px;width:16.0px;height:7.0px;background:repeating-linear-gradient(0deg,rgba(235,170,140,.55) 0 1px,rgba(0,0,0,0) 1px 2.300px);border-radius:50%;opacity:.8;"></div>
<svg style="position:absolute;left:389.2px;top:373.2px;overflow:visible;" width="50.5" height="8.0" viewBox="0 0 1000 101.0" preserveAspectRatio="none"><path d="M784 91L784 98L790 98L790 91ZM840 84L840 91L847 91L847 84ZM827 84L827 90L834 91L834 84ZM745 84L745 91L752 91L752 84ZM733 84L733 91L740 91L740 84ZM192 84L192 91L199 91L199 84ZM790 79L790 86L797 86L797 79ZM778 79L778 86L784 86L784 79ZM924 64L924 76L934 76L934 64ZM105 50L97 50L100 66L95 78L80 89L62 92L62 100L85 96L101 85L105 78L108 66ZM289 42L289 49L295 49L295 43ZM582 41L573 40L577 54L576 69L568 80L560 83L549 83L541 80L536 72L538 53L529 53L528 73L532 83L541 90L551 92L565 91L575 85L580 80L586 64L585 48ZM992 43L983 40L974 41L965 52L965 60L955 65L952 74L952 100L961 100L961 73L965 68L985 72L992 70L997 65L999 53ZM978 50L984 49L989 51L991 57L987 63L981 64L974 61L974 56ZM872 48L863 47L863 63L856 68L844 65L841 60L841 47L833 47L833 60L830 66L825 68L816 66L806 56L812 53L812 45L782 37L766 37L766 45L784 46L799 50L782 63L770 67L750 66L747 61L747 47L738 47L738 61L734 66L730 68L719 66L715 61L712 50L704 50L706 62L703 77L688 88L668 92L668 100L684 98L699 92L709 83L713 73L719 76L734 76L742 72L750 76L772 75L785 70L798 60L808 73L816 76L829 76L837 72L846 76L862 75L868 71L871 66ZM481 46L459 38L434 37L434 45L456 46L467 50L450 63L432 68L422 68L415 64L412 60L412 40L403 40L403 60L398 68L392 66L389 63L386 47L378 47L376 61L371 68L366 68L361 63L359 47L350 47L350 60L345 66L341 68L329 66L321 48L313 48L317 59L317 71L313 83L308 88L294 92L282 89L276 80L278 61L269 63L268 82L272 91L277 96L287 100L299 100L314 94L321 87L326 74L329 76L344 76L355 69L362 76L371 77L378 75L382 67L387 75L393 77L400 77L408 71L418 76L440 75L454 70L470 58L481 53ZM220 45L195 38L174 37L174 45L191 46L208 50L189 63L173 68L156 68L153 55L147 48L142 45L130 47L124 53L124 66L129 73L146 77L133 89L110 92L110 100L128 99L139 95L150 86L154 76L175 76L194 70L209 58L220 53ZM132 58L136 55L141 55L146 60L146 67L136 66L132 62ZM548 30L548 37L555 37L555 30ZM97 30L97 37L104 37L104 30ZM864 28L864 35L871 35L871 28ZM824 23L834 38L841 38L850 23L844 23L838 33L831 23ZM652 13L651 19L658 19L658 13ZM639 13L639 19L646 19L646 13ZM646 0L646 7L652 7L652 0ZM604 0L604 63L607 72L616 76L644 76L656 72L664 58L664 41L659 33L652 28L638 32L633 42L634 50L637 55L644 58L656 57L650 65L637 68L620 68L614 65L612 60L612 0ZM647 37L652 38L656 42L656 47L652 51L646 51L642 46L642 41ZM56 0L48 0L48 55L45 72L35 80L19 83L9 75L11 61L3 61L0 70L1 78L9 88L18 91L29 90L45 85L52 77L56 61Z" fill="#3a3a3a" fill-rule="evenodd" stroke="#3a3a3a" stroke-width="5"/></svg>
<svg style="position:absolute;left:368.5px;top:388.5px;overflow:visible;" width="71.2" height="7.7" viewBox="0 0 1000 73.9" preserveAspectRatio="none"><path d="M537 68L537 73L542 73L542 68ZM982 62L988 73L993 73L1000 63L995 62L990 69L986 62ZM946 61L946 67L951 67L951 61ZM937 61L937 66L942 67L942 61ZM682 61L682 67L687 67L687 61ZM673 61L673 67L678 67L678 61ZM520 61L520 67L524 67L524 61ZM511 61L511 67L516 67L516 61ZM215 61L215 67L220 67L220 61ZM542 60L542 65L546 65L546 60ZM533 60L533 65L538 65L538 60ZM983 36L977 36L978 49L976 56L970 62L964 65L951 67L951 73L968 70L979 62L984 50L984 42ZM800 36L794 36L795 48L792 57L781 65L768 67L768 73L785 70L796 63L800 56L801 49ZM82 36L76 36L78 48L74 57L63 65L50 67L50 73L67 70L78 63L82 56L83 49ZM221 34L214 34L214 46L209 50L199 50L197 39L192 34L184 33L180 35L175 41L176 50L182 55L192 56L183 65L166 67L166 73L181 72L189 69L194 63L198 56L211 56L216 54L220 46ZM182 42L186 39L189 40L192 44L192 49L183 48L182 46ZM271 31L271 36L276 36L276 31ZM635 44L636 49L640 52L647 53L656 50L663 56L674 56L680 53L682 49L683 34L677 34L677 45L675 48L671 50L664 49L661 46L658 29L652 29L651 32L643 35L638 39ZM653 38L654 44L653 46L648 48L641 46L642 43L645 39L650 37ZM543 34L537 34L536 45L534 48L531 50L524 49L522 47L521 34L514 34L514 45L511 49L500 49L496 42L496 29L490 29L490 45L486 50L483 49L480 46L478 42L478 34L472 35L471 44L466 50L463 50L460 47L457 34L451 34L451 43L448 48L444 50L437 49L429 41L433 39L433 33L420 28L406 27L400 27L400 33L413 33L424 36L411 46L399 50L390 50L385 46L383 42L383 29L378 29L377 45L373 50L369 49L367 45L365 34L359 34L357 46L353 50L350 50L347 47L345 42L345 34L339 34L338 44L335 48L332 50L324 49L321 47L320 34L314 35L314 45L311 49L308 50L302 49L299 46L295 35L289 35L292 45L292 53L290 60L286 64L275 67L266 65L262 58L263 45L257 45L256 60L258 66L263 70L268 72L278 73L289 69L296 62L299 54L301 56L311 56L317 52L323 56L334 56L342 50L346 55L354 56L358 55L362 49L366 55L370 56L375 56L380 52L388 56L400 56L411 53L423 44L429 52L437 56L449 55L455 50L459 55L467 56L471 55L475 49L478 55L483 56L488 56L493 52L500 56L511 56L517 52L523 56L533 56L539 53L542 49ZM45 30L39 26L31 26L24 29L21 33L22 39L24 42L39 49L38 52L34 56L18 60L11 58L7 55L6 52L8 44L2 44L0 50L1 58L5 62L12 65L26 65L39 61L44 56L45 48L41 43L30 39L27 35L33 31L38 32L41 35L48 35ZM764 30L759 27L750 26L744 28L739 32L739 37L743 42L756 48L756 51L752 56L738 59L729 58L725 56L724 52L726 43L720 43L718 50L720 58L725 63L732 65L747 64L758 59L763 52L762 46L758 42L748 39L745 35L750 31L756 31L759 35L766 35ZM474 22L474 27L478 27L479 22ZM465 22L465 27L470 27L470 22ZM319 20L319 25L324 25L324 20ZM310 20L310 25L315 25L315 20ZM934 17L941 28L946 28L953 17L949 17L944 24L939 17ZM508 17L515 28L520 28L527 17L522 17L517 24L513 17ZM864 17L864 22L869 22L869 17ZM413 17L413 22L418 22L418 17ZM722 15L728 26L733 26L740 15L736 15L731 22L726 15ZM469 13L469 18L474 18L474 13ZM947 34L941 34L941 44L939 48L935 50L927 49L903 21L903 18L905 16L928 6L927 0L902 11L897 15L896 21L897 24L911 41L911 45L907 49L889 49L880 41L885 39L885 33L871 28L858 27L851 27L851 33L864 33L876 36L859 48L850 50L839 49L835 42L834 29L828 29L828 32L817 36L812 42L811 47L813 50L820 53L833 50L839 56L852 56L863 53L875 44L880 52L888 56L909 55L913 53L917 48L925 55L938 56L943 54L945 50ZM828 37L830 45L829 46L822 48L817 46L817 43L822 39ZM580 0L580 46L582 51L585 54L589 56L609 56L615 53L619 47L619 40L617 34L605 21L605 18L630 6L630 0L605 11L600 14L599 22L612 39L613 45L608 49L592 50L588 48L586 44L586 0ZM95 0L95 46L97 50L100 54L104 56L124 56L129 54L134 48L135 40L120 19L125 15L144 7L145 0L120 11L115 14L114 17L114 22L128 39L128 44L124 49L107 50L104 49L101 44L101 0Z" fill="#3a3a3a" fill-rule="evenodd" stroke="#3a3a3a" stroke-width="3.5"/></svg>
<svg style="position:absolute;left:352.0px;top:402.7px;overflow:visible;" width="87.7" height="8.3" viewBox="0 0 1000 58.5" preserveAspectRatio="none"><path d="M858 49L858 53L862 53L862 49ZM851 49L851 53L855 53L855 49ZM675 49L675 53L679 53L679 49ZM667 49L667 52L671 53L671 49ZM459 49L459 53L463 53L463 49ZM452 49L452 53L456 53L456 49ZM159 49L159 53L163 53L163 49ZM152 49L152 53L155 53L155 49ZM807 29L802 29L804 36L801 45L793 51L781 53L781 58L794 56L804 50L808 41L808 34ZM282 29L277 29L279 39L276 46L268 52L257 53L257 58L271 56L280 49L284 40ZM107 29L103 29L104 36L101 45L94 51L82 53L82 58L95 56L105 50L109 41L109 34ZM412 27L408 27L407 36L403 39L401 39L394 31L389 30L386 31L383 35L383 38L387 43L383 46L371 47L365 45L362 41L364 34L359 34L357 43L361 49L366 51L383 51L387 49L392 45L392 40L388 37L390 34L391 34L399 44L406 44L409 42L412 36ZM597 32L592 27L585 27L580 31L576 38L568 39L564 36L562 29L557 29L558 36L556 44L548 51L536 53L536 58L546 57L554 53L560 48L562 42L566 44L576 44L580 42L586 45L593 45L597 40ZM585 33L589 32L592 34L592 37L590 40L585 40L582 38ZM309 27L309 30L332 30L332 27ZM529 27L527 26L521 27L517 31L516 33L517 41L522 43L528 44L528 46L521 52L508 53L508 58L523 56L531 50L534 44L534 38L533 32ZM521 33L524 31L527 32L529 39L523 38L521 36ZM637 24L637 28L641 28L641 25ZM763 28L757 27L757 36L753 39L747 39L744 36L743 23L739 23L738 35L735 39L732 39L730 37L728 27L724 27L723 36L719 39L716 39L714 37L712 27L708 27L707 35L702 39L696 39L694 37L693 27L688 27L688 36L684 39L677 38L675 34L675 27L671 27L670 36L666 39L662 39L659 37L656 28L651 28L653 34L654 41L651 48L648 51L640 53L633 52L630 46L631 36L626 36L625 48L627 53L630 56L636 58L643 58L652 54L656 50L659 43L668 44L674 42L678 44L686 44L691 41L695 44L704 44L711 40L714 44L720 45L723 44L726 39L728 43L732 45L737 44L741 41L747 44L755 44L761 40ZM422 34L423 39L427 42L434 42L439 40L444 44L453 44L459 40L460 27L455 27L455 36L451 39L445 39L442 36L440 23L435 23L435 25L428 27ZM436 29L436 37L430 38L427 36L430 31ZM64 27L51 22L37 21L37 26L50 27L56 29L45 37L36 39L26 39L24 30L19 26L13 27L8 31L8 38L11 42L21 44L17 49L12 52L0 53L0 58L8 58L18 54L23 50L25 44L38 44L46 42L64 31ZM13 33L16 31L19 32L20 34L21 39L14 38ZM802 17L802 21L805 21L806 17ZM277 17L277 21L281 21L281 17ZM102 17L102 21L106 21L106 17ZM876 16L876 20L879 20L879 16ZM869 16L869 20L873 20L873 16ZM758 16L758 20L762 20L762 16ZM692 16L692 20L696 20L696 16ZM685 16L685 20L689 20L689 16ZM412 16L412 20L416 20L416 16ZM405 16L405 20L408 20L408 16ZM233 16L233 20L237 20L237 16ZM666 13L671 22L675 22L680 13L677 13L673 19L669 13ZM48 13L48 17L51 17L51 13ZM988 7L988 11L992 11L992 8ZM499 7L499 11L503 11L503 7ZM492 7L492 11L495 11L495 7ZM958 0L939 8L934 12L935 19L945 33L943 38L924 39L922 29L917 26L912 27L906 32L906 38L911 43L919 44L912 51L899 53L899 58L911 57L916 54L921 50L924 44L942 44L946 42L950 38L950 31L940 18L939 15L943 11L958 5ZM911 33L914 31L917 32L919 35L919 39L912 38L911 36ZM222 0L203 8L198 12L199 19L209 33L207 38L189 39L187 32L184 28L181 26L176 27L171 31L170 38L173 42L183 45L176 52L163 53L163 58L173 57L179 55L186 50L188 44L208 44L214 38L217 41L222 44L231 44L235 42L238 36L238 27L233 27L233 34L231 38L222 39L203 16L204 13L222 5ZM175 33L177 32L180 32L183 34L183 39L177 38L175 36ZM964 0L964 36L966 40L971 44L987 44L994 42L998 36L1000 26L997 20L992 16L987 17L983 20L981 26L982 29L985 33L987 34L994 33L991 38L973 39L969 37L969 0ZM989 22L992 22L994 24L994 28L992 30L989 30L987 27L987 24ZM836 0L836 34L837 39L840 42L843 44L852 44L857 41L861 44L869 44L874 41L879 44L888 44L893 41L895 36L895 0L890 0L890 34L889 37L886 39L879 39L877 37L877 27L871 28L871 36L869 39L863 39L859 37L859 27L854 27L854 35L852 38L843 38L841 36L841 0ZM773 0L773 44L778 44L778 0ZM495 0L495 4L499 4L499 0ZM471 0L471 37L473 41L478 44L494 44L500 42L505 36L506 24L504 20L499 16L491 18L488 24L488 28L491 32L494 34L501 33L498 37L490 39L480 39L476 37L476 0ZM495 22L497 21L500 23L501 27L500 29L496 30L494 28L493 24ZM249 0L249 44L253 44L253 0ZM137 0L137 34L138 39L140 42L144 44L155 43L159 38L160 27L155 27L155 35L153 38L146 39L142 37L142 0ZM74 0L74 44L79 44L79 0Z" fill="#3a3a3a" fill-rule="evenodd" stroke="#3a3a3a" stroke-width="2.8"/></svg>
</div></div>
</div>
</body></html>
